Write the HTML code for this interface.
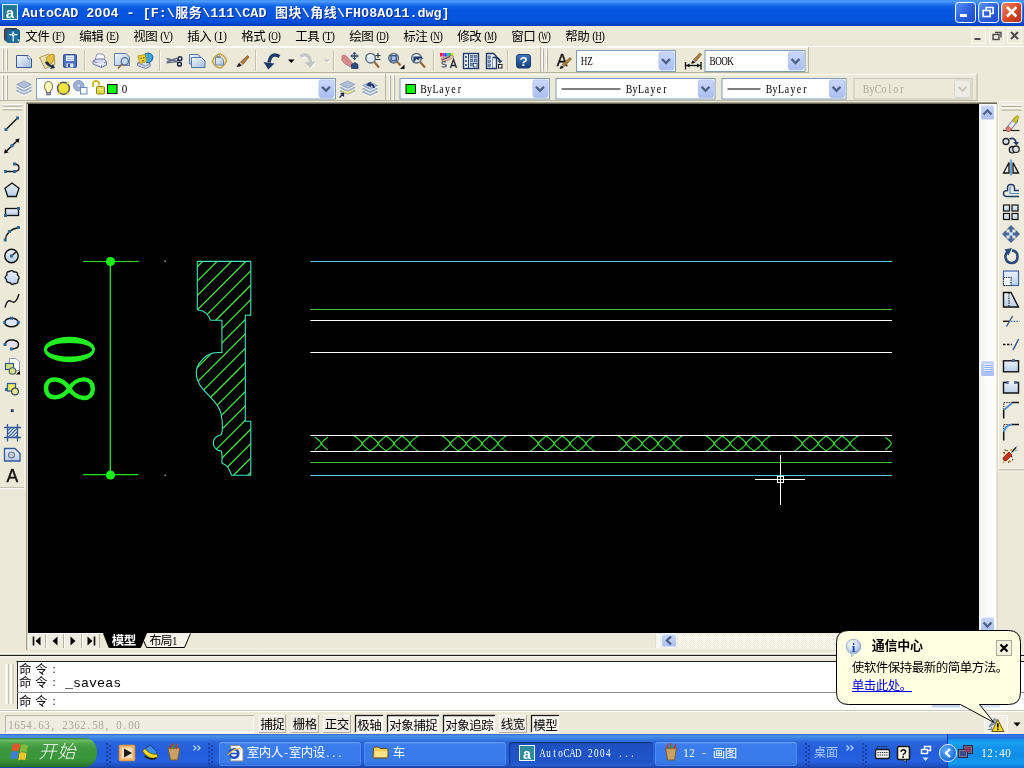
<!DOCTYPE html>
<html lang="zh-CN">
<head>
<meta charset="utf-8">
<title>AutoCAD 2004 - [F:\服务\111\CAD 图块\角线\FH08A011.dwg]</title>
<style>
html,body{margin:0;padding:0;}
body{width:1024px;height:768px;overflow:hidden;position:relative;background:#ECE9D8;font-family:"Liberation Sans",sans-serif;font-size:12px;}
#screen{position:absolute;left:0;top:0;width:1024px;height:768px;overflow:hidden;}
#screen div{position:absolute;box-sizing:border-box;}
#tl span{position:absolute;white-space:pre;color:transparent;overflow:hidden;max-width:320px;pointer-events:none;}
#ov{position:absolute;left:0;top:0;width:1024px;height:768px;will-change:transform;}
#ov .cjk{font-family:"Liberation Sans","Noto Sans CJK SC",sans-serif;}

#title{background:linear-gradient(to bottom,#3F8EF4 0%,#4C9BFA 6%,#2F80F2 13%,#0F62E6 24%,#0757E0 40%,#0555DF 75%,#054CD6 86%,#0443C4 95%,#0A3DB0 100%);}
#menubar{background:#ECE9D8;}
.tb{background:#ECE9D8;}
#canvas{background:#000;}
#cmd{background:#fff;}
#taskbar{background:linear-gradient(to bottom,#3168D5 0%,#4993E6 6%,#3D84E4 12%,#2966DB 24%,#245DDB 50%,#2562DF 80%,#1F50C0 94%,#1941A5 100%);}
#start{background:linear-gradient(to bottom,#388238 0%,#6DBB69 8%,#4FA64B 18%,#3C963C 40%,#3A973A 70%,#2F7E2F 92%,#256A25 100%);border-radius:0 12px 12px 0/0 14px 14px 0;}
#tray{background:linear-gradient(to bottom,#2868DC 0%,#3478E4 6%,#2A6EE0 12%,#1C8AE8 16%,#18A2F2 24%,#1394EA 40%,#0F8DE8 65%,#139BF0 86%,#0E6FD2 100%);border-left:1px solid #103CA0;}
.task{border-radius:3px;background:linear-gradient(to bottom,#5591F0 0%,#3A7CEC 12%,#3A7BEA 80%,#2F6CDC 100%);box-shadow:inset 0 0 0 1px rgba(255,255,255,.12);}
.task.act{background:linear-gradient(to bottom,#1B4BB6 0%,#1E52C4 20%,#1F55C8 85%,#2A60D0 100%);box-shadow:inset 1px 1px 1px rgba(0,0,0,.35);}

</style>
</head>
<body>
<div id="screen">
<div class="tbar" id="title" style="left:0px;top:0px;width:1024px;height:26px;"></div>
<div class="" id="menubar" style="left:0px;top:26px;width:1024px;height:20px;"></div>
<div class="" id="canvas" style="left:28px;top:104px;width:951px;height:529px;"></div>
<div class="" id="cmd" style="left:18px;top:662px;width:1006px;height:47.5px;"></div>
<div class="" id="taskbar" style="left:0px;top:734px;width:1024px;height:34px;"></div>
<div class="" id="start" style="left:0px;top:738px;width:97px;height:29px;"></div>
<div class="task" style="left:219px;top:741.5px;width:142px;height:24.5px;"></div>
<div class="task" style="left:364px;top:741.5px;width:142px;height:24.5px;"></div>
<div class="task act" style="left:508.5px;top:741.5px;width:144px;height:24.5px;"></div>
<div class="task" style="left:654.5px;top:741.5px;width:142px;height:24.5px;"></div>
<div class="" id="tray" style="left:947px;top:734px;width:77px;height:34px;"></div>
<div id="tl" style="left:0;top:0;width:1024px;height:768px"><span style="left:22px;top:4px;font-size:13px;line-height:16px">AutoCAD 2004 - [F:\服务\111\CAD 图块\角线\FH08A011.dwg]</span><span style="left:25.5px;top:30px;font-size:12px;line-height:12px">文件(F)</span><span style="left:79.5px;top:30px;font-size:12px;line-height:12px">编辑(E)</span><span style="left:133.5px;top:30px;font-size:12px;line-height:12px">视图(V)</span><span style="left:187.5px;top:30px;font-size:12px;line-height:12px">插入(I)</span><span style="left:241.5px;top:30px;font-size:12px;line-height:12px">格式(O)</span><span style="left:295.5px;top:30px;font-size:12px;line-height:12px">工具(T)</span><span style="left:349.5px;top:30px;font-size:12px;line-height:12px">绘图(D)</span><span style="left:403.5px;top:30px;font-size:12px;line-height:12px">标注(N)</span><span style="left:457.5px;top:30px;font-size:12px;line-height:12px">修改(M)</span><span style="left:511.5px;top:30px;font-size:12px;line-height:12px">窗口(W)</span><span style="left:565.5px;top:30px;font-size:12px;line-height:12px">帮助(H)</span><span style="left:581px;top:54.5px;font-size:12px;line-height:12px">HZ</span><span style="left:709.5px;top:54.5px;font-size:12px;line-height:12px">BOOK</span><span style="left:420.5px;top:82.5px;font-size:12px;line-height:12px">ByLayer</span><span style="left:626px;top:82.5px;font-size:12px;line-height:12px">ByLayer</span><span style="left:766px;top:82.5px;font-size:12px;line-height:12px">ByLayer</span><span style="left:863px;top:82.5px;font-size:12px;line-height:12px">ByColor</span><span style="left:121.5px;top:83px;font-size:12px;line-height:12px">0</span><span style="left:150px;top:634.5px;font-size:12px;line-height:12px">布局1</span><span style="left:112px;top:634px;font-size:12px;line-height:12px">模型</span><span style="left:19px;top:663px;font-size:12px;line-height:12px">命令: </span><span style="left:19px;top:676px;font-size:12px;line-height:12px">命令: _saveas</span><span style="left:19px;top:695px;font-size:12px;line-height:12px">命令: </span><span style="left:8px;top:719px;font-size:12px;line-height:12px">1654.63, 2362.58, 0.00</span><span style="left:260.5px;top:718.5px;font-size:12px;line-height:12px">捕捉</span><span style="left:293px;top:718.5px;font-size:12px;line-height:12px">栅格</span><span style="left:325px;top:718.5px;font-size:12px;line-height:12px">正交</span><span style="left:357.5px;top:719px;font-size:12px;line-height:12px">极轴</span><span style="left:389.5px;top:719px;font-size:12px;line-height:12px">对象捕捉</span><span style="left:445.5px;top:719px;font-size:12px;line-height:12px">对象追踪</span><span style="left:501px;top:718.5px;font-size:12px;line-height:12px">线宽</span><span style="left:533.5px;top:719px;font-size:12px;line-height:12px">模型</span><span style="left:38px;top:743px;font-size:13px;line-height:19px">开始</span><span style="left:247px;top:746.5px;font-size:12px;line-height:12px">室内人-室内设...</span><span style="left:393px;top:746.5px;font-size:12px;line-height:12px">车</span><span style="left:539.5px;top:747px;font-size:12px;line-height:12px">AutoCAD 2004 ...</span><span style="left:683px;top:747px;font-size:12px;line-height:12px">12 - 画图</span><span style="left:814px;top:746.5px;font-size:12px;line-height:12px">桌面</span><span style="left:981px;top:747px;font-size:12px;line-height:12px">12:40</span><span style="left:872px;top:639px;font-size:12px;line-height:12px">通信中心</span><span style="left:852px;top:661.5px;font-size:12px;line-height:12px">使软件保持最新的简单方法。</span><span style="left:852px;top:679px;font-size:12px;line-height:12px">单击此处。</span></div>
<svg id="ov" width="1024" height="768" viewBox="0 0 1024 768">
<defs>
<linearGradient id="cbbtn" x1="0" y1="0" x2="0" y2="1"><stop offset="0" stop-color="#C9D7FC"/><stop offset=".5" stop-color="#BBCCF8"/><stop offset="1" stop-color="#A9BCEF"/></linearGradient>
<linearGradient id="tbtn" x1="0" y1="0" x2="1" y2="1"><stop offset="0" stop-color="#5C93F8"/><stop offset=".5" stop-color="#2C62E0"/><stop offset="1" stop-color="#1D49C8"/></linearGradient>
<linearGradient id="tclose" x1="0" y1="0" x2="1" y2="1"><stop offset="0" stop-color="#F0886A"/><stop offset=".5" stop-color="#D84A26"/><stop offset="1" stop-color="#B32F12"/></linearGradient>
<linearGradient id="icoblue" x1="0" y1="0" x2="1" y2="1"><stop offset="0" stop-color="#F4F8FD"/><stop offset="1" stop-color="#9DBBDD"/></linearGradient>
<linearGradient id="icoblue2" x1="0" y1="0" x2="0" y2="1"><stop offset="0" stop-color="#EAF1FA"/><stop offset="1" stop-color="#B9CFE8"/></linearGradient>
<linearGradient id="helpg" x1="0" y1="0" x2="0" y2="1"><stop offset="0" stop-color="#3F78B8"/><stop offset="1" stop-color="#14407C"/></linearGradient>
<linearGradient id="vsb" x1="0" y1="0" x2="1" y2="0"><stop offset="0" stop-color="#F3F1EC"/><stop offset=".5" stop-color="#FDFDFB"/><stop offset="1" stop-color="#FEFEFB"/></linearGradient>
<radialGradient id="infog" cx=".4" cy=".35" r=".7"><stop offset="0" stop-color="#FFFFFF"/><stop offset=".6" stop-color="#C8D8F0"/><stop offset="1" stop-color="#7E9CCB"/></radialGradient>
<radialGradient id="trayb" cx=".4" cy=".35" r=".7"><stop offset="0" stop-color="#5FB0FF"/><stop offset="1" stop-color="#1463D6"/></radialGradient>
</defs>
<rect x="2.5" y="4.5" width="15" height="15" fill="#2A8AA0" stroke="#DDF5F8" stroke-width="1"/>
<rect x="4" y="6" width="12" height="12" fill="#1F7896"/>
<text x="10" y="17.5" text-anchor="middle" font-family="'Liberation Sans',sans-serif" font-weight="bold" font-size="15" fill="#fff">a</text>
<text transform="translate(23,18) scale(1.03,1)" x="0 7.8 15.6 23.4 31.2 39 46.8 54.6 62.4" font-family="'Liberation Mono',monospace" font-size="13" font-weight="bold" fill="#0A2C8C">AutoCAD 2</text>
<text transform="translate(99.47,18) scale(1.07,1)" text-anchor="middle" font-family="'Liberation Sans',sans-serif" font-size="13" font-weight="bold" fill="#0A2C8C">0</text>
<text transform="translate(107.52,18) scale(1.07,1)" text-anchor="middle" font-family="'Liberation Sans',sans-serif" font-size="13" font-weight="bold" fill="#0A2C8C">0</text>
<text transform="translate(111.55,18) scale(1.03,1)" x="0 7.8 15.6 23.4 31.2 39 46.8 54.6" font-family="'Liberation Mono',monospace" font-size="13" font-weight="bold" fill="#0A2C8C">4 - [F:\</text>
<text class="cjk" x="176.25 189.85" y="17.78" font-size="13" font-weight="bold" fill="#0A2C8C">服务</text>
<text transform="translate(203.15,18) scale(1.03,1)" x="0 7.8 15.6 23.4 31.2 39 46.8 54.6" font-family="'Liberation Mono',monospace" font-size="13" font-weight="bold" fill="#0A2C8C">\111\CAD</text>
<text class="cjk" x="275.9 289.5" y="17.78" font-size="13" font-weight="bold" fill="#0A2C8C">图块</text>
<text transform="translate(302.8,18) scale(1.03,1)" x="0" font-family="'Liberation Mono',monospace" font-size="13" font-weight="bold" fill="#0A2C8C">\</text>
<text class="cjk" x="311.15 324.75" y="17.78" font-size="13" font-weight="bold" fill="#0A2C8C">角线</text>
<text transform="translate(338.05,18) scale(1.03,1)" x="0 7.8 15.6" font-family="'Liberation Mono',monospace" font-size="13" font-weight="bold" fill="#0A2C8C">\FH</text>
<text transform="translate(366.23,18) scale(1.07,1)" text-anchor="middle" font-family="'Liberation Sans',sans-serif" font-size="13" font-weight="bold" fill="#0A2C8C">0</text>
<text transform="translate(370.25,18) scale(1.03,1)" x="0 7.8" font-family="'Liberation Mono',monospace" font-size="13" font-weight="bold" fill="#0A2C8C">8A</text>
<text transform="translate(390.38,18) scale(1.07,1)" text-anchor="middle" font-family="'Liberation Sans',sans-serif" font-size="13" font-weight="bold" fill="#0A2C8C">0</text>
<text transform="translate(394.4,18) scale(1.03,1)" x="0 7.8 15.6 23.4 31.2 39 46.8" font-family="'Liberation Mono',monospace" font-size="13" font-weight="bold" fill="#0A2C8C">11.dwg]</text>
<text transform="translate(22,17) scale(1.03,1)" x="0 7.8 15.6 23.4 31.2 39 46.8 54.6 62.4" font-family="'Liberation Mono',monospace" font-size="13" font-weight="bold" fill="#fff">AutoCAD 2</text>
<text transform="translate(98.47,17) scale(1.07,1)" text-anchor="middle" font-family="'Liberation Sans',sans-serif" font-size="13" font-weight="bold" fill="#fff">0</text>
<text transform="translate(106.52,17) scale(1.07,1)" text-anchor="middle" font-family="'Liberation Sans',sans-serif" font-size="13" font-weight="bold" fill="#fff">0</text>
<text transform="translate(110.55,17) scale(1.03,1)" x="0 7.8 15.6 23.4 31.2 39 46.8 54.6" font-family="'Liberation Mono',monospace" font-size="13" font-weight="bold" fill="#fff">4 - [F:\</text>
<text class="cjk" x="175.25 188.85" y="16.78" font-size="13" font-weight="bold" fill="#fff">服务</text>
<text transform="translate(202.15,17) scale(1.03,1)" x="0 7.8 15.6 23.4 31.2 39 46.8 54.6" font-family="'Liberation Mono',monospace" font-size="13" font-weight="bold" fill="#fff">\111\CAD</text>
<text class="cjk" x="274.9 288.5" y="16.78" font-size="13" font-weight="bold" fill="#fff">图块</text>
<text transform="translate(301.8,17) scale(1.03,1)" x="0" font-family="'Liberation Mono',monospace" font-size="13" font-weight="bold" fill="#fff">\</text>
<text class="cjk" x="310.15 323.75" y="16.78" font-size="13" font-weight="bold" fill="#fff">角线</text>
<text transform="translate(337.05,17) scale(1.03,1)" x="0 7.8 15.6" font-family="'Liberation Mono',monospace" font-size="13" font-weight="bold" fill="#fff">\FH</text>
<text transform="translate(365.23,17) scale(1.07,1)" text-anchor="middle" font-family="'Liberation Sans',sans-serif" font-size="13" font-weight="bold" fill="#fff">0</text>
<text transform="translate(369.25,17) scale(1.03,1)" x="0 7.8" font-family="'Liberation Mono',monospace" font-size="13" font-weight="bold" fill="#fff">8A</text>
<text transform="translate(389.38,17) scale(1.07,1)" text-anchor="middle" font-family="'Liberation Sans',sans-serif" font-size="13" font-weight="bold" fill="#fff">0</text>
<text transform="translate(393.4,17) scale(1.03,1)" x="0 7.8 15.6 23.4 31.2 39 46.8" font-family="'Liberation Mono',monospace" font-size="13" font-weight="bold" fill="#fff">11.dwg]</text>
<rect x="955.5" y="2.5" width="20" height="20" fill="url(#tbtn)" stroke="#fff" stroke-width="1" rx="3"/>
<rect x="960" y="14" width="7" height="3" fill="#fff"/>
<rect x="978.6" y="2.5" width="20" height="20" fill="url(#tbtn)" stroke="#fff" stroke-width="1" rx="3"/>
<path d="M986.1 7.5h7v6h-7zM986.1 7v2" fill="none" stroke="#fff" stroke-width="1.6"/>
<rect x="983.1" y="10.5" width="7" height="6" fill="#2C62E0" stroke="#fff" stroke-width="1.6"/>
<rect x="1001.7" y="2.5" width="20" height="20" fill="url(#tclose)" stroke="#fff" stroke-width="1" rx="3"/>
<path d="M1006.9 7l9.500 9.500M1016.4 7l-9.500 9.500" fill="none" stroke="#fff" stroke-width="2.6"/>
<text class="cjk" x="25.25 37.25" y="40.75" font-size="12.5" fill="#000">文件</text>
<text transform="translate(51,40) scale(0.92,1)" x="1.26" font-family="'Liberation Serif',serif" font-size="12" fill="#000">(</text>
<text transform="translate(55.5,40) scale(0.92,1)" x="-0.08" font-family="'Liberation Serif',serif" font-size="12" fill="#000">F</text>
<text transform="translate(60,40) scale(0.92,1)" x="1.26" font-family="'Liberation Serif',serif" font-size="12" fill="#000">)</text>
<line x1="55.5" y1="42.5" x2="61.5" y2="42.5" stroke="#000" stroke-width="1"/>
<text class="cjk" x="79.25 91.25" y="40.75" font-size="12.5" fill="#000">编辑</text>
<text transform="translate(105,40) scale(0.92,1)" x="1.26" font-family="'Liberation Serif',serif" font-size="12" fill="#000">(</text>
<text transform="translate(109.5,40) scale(0.9,1)" x="-0.33" font-family="'Liberation Serif',serif" font-size="12" fill="#000">E</text>
<text transform="translate(114,40) scale(0.92,1)" x="1.26" font-family="'Liberation Serif',serif" font-size="12" fill="#000">)</text>
<line x1="109.5" y1="42.5" x2="115.5" y2="42.5" stroke="#000" stroke-width="1"/>
<text class="cjk" x="133.25 145.25" y="40.75" font-size="12.5" fill="#000">视图</text>
<text transform="translate(159,40) scale(0.92,1)" x="1.26" font-family="'Liberation Serif',serif" font-size="12" fill="#000">(</text>
<text transform="translate(163.5,40) scale(0.76,1)" x="-0.39" font-family="'Liberation Serif',serif" font-size="12" fill="#000">V</text>
<text transform="translate(168,40) scale(0.92,1)" x="1.26" font-family="'Liberation Serif',serif" font-size="12" fill="#000">)</text>
<line x1="163.5" y1="42.5" x2="169.5" y2="42.5" stroke="#000" stroke-width="1"/>
<text class="cjk" x="187.25 199.25" y="40.75" font-size="12.5" fill="#000">插入</text>
<text transform="translate(213,40) scale(0.92,1)" x="1.26" font-family="'Liberation Serif',serif" font-size="12" fill="#000">(</text>
<text transform="translate(217.5,40) scale(0.92,1)" x="1.26" font-family="'Liberation Serif',serif" font-size="12" fill="#000">I</text>
<text transform="translate(222,40) scale(0.92,1)" x="1.26" font-family="'Liberation Serif',serif" font-size="12" fill="#000">)</text>
<line x1="217.5" y1="42.5" x2="223.5" y2="42.5" stroke="#000" stroke-width="1"/>
<text class="cjk" x="241.25 253.25" y="40.75" font-size="12.5" fill="#000">格式</text>
<text transform="translate(267,40) scale(0.92,1)" x="1.26" font-family="'Liberation Serif',serif" font-size="12" fill="#000">(</text>
<text transform="translate(271.5,40) scale(0.76,1)" x="-0.39" font-family="'Liberation Serif',serif" font-size="12" fill="#000">O</text>
<text transform="translate(276,40) scale(0.92,1)" x="1.26" font-family="'Liberation Serif',serif" font-size="12" fill="#000">)</text>
<line x1="271.5" y1="42.5" x2="277.5" y2="42.5" stroke="#000" stroke-width="1"/>
<text class="cjk" x="295.25 307.25" y="40.75" font-size="12.5" fill="#000">工具</text>
<text transform="translate(321,40) scale(0.92,1)" x="1.26" font-family="'Liberation Serif',serif" font-size="12" fill="#000">(</text>
<text transform="translate(325.5,40) scale(0.9,1)" x="-0.33" font-family="'Liberation Serif',serif" font-size="12" fill="#000">T</text>
<text transform="translate(330,40) scale(0.92,1)" x="1.26" font-family="'Liberation Serif',serif" font-size="12" fill="#000">)</text>
<line x1="325.5" y1="42.5" x2="331.5" y2="42.5" stroke="#000" stroke-width="1"/>
<text class="cjk" x="349.25 361.25" y="40.75" font-size="12.5" fill="#000">绘图</text>
<text transform="translate(375,40) scale(0.92,1)" x="1.26" font-family="'Liberation Serif',serif" font-size="12" fill="#000">(</text>
<text transform="translate(379.5,40) scale(0.76,1)" x="-0.39" font-family="'Liberation Serif',serif" font-size="12" fill="#000">D</text>
<text transform="translate(384,40) scale(0.92,1)" x="1.26" font-family="'Liberation Serif',serif" font-size="12" fill="#000">)</text>
<line x1="379.5" y1="42.5" x2="385.5" y2="42.5" stroke="#000" stroke-width="1"/>
<text class="cjk" x="403.25 415.25" y="40.75" font-size="12.5" fill="#000">标注</text>
<text transform="translate(429,40) scale(0.92,1)" x="1.26" font-family="'Liberation Serif',serif" font-size="12" fill="#000">(</text>
<text transform="translate(433.5,40) scale(0.76,1)" x="-0.39" font-family="'Liberation Serif',serif" font-size="12" fill="#000">N</text>
<text transform="translate(438,40) scale(0.92,1)" x="1.26" font-family="'Liberation Serif',serif" font-size="12" fill="#000">)</text>
<line x1="433.5" y1="42.5" x2="439.5" y2="42.5" stroke="#000" stroke-width="1"/>
<text class="cjk" x="457.25 469.25" y="40.75" font-size="12.5" fill="#000">修改</text>
<text transform="translate(483,40) scale(0.92,1)" x="1.26" font-family="'Liberation Serif',serif" font-size="12" fill="#000">(</text>
<text transform="translate(487.5,40) scale(0.62,1)" x="-0.48" font-family="'Liberation Serif',serif" font-size="12" fill="#000">M</text>
<text transform="translate(492,40) scale(0.92,1)" x="1.26" font-family="'Liberation Serif',serif" font-size="12" fill="#000">)</text>
<line x1="487.5" y1="42.5" x2="493.5" y2="42.5" stroke="#000" stroke-width="1"/>
<text class="cjk" x="511.25 523.25" y="40.75" font-size="12.5" fill="#000">窗口</text>
<text transform="translate(537,40) scale(0.92,1)" x="1.26" font-family="'Liberation Serif',serif" font-size="12" fill="#000">(</text>
<text transform="translate(541.5,40) scale(0.58,1)" x="-0.51" font-family="'Liberation Serif',serif" font-size="12" fill="#000">W</text>
<text transform="translate(546,40) scale(0.92,1)" x="1.26" font-family="'Liberation Serif',serif" font-size="12" fill="#000">)</text>
<line x1="541.5" y1="42.5" x2="547.5" y2="42.5" stroke="#000" stroke-width="1"/>
<text class="cjk" x="565.25 577.25" y="40.75" font-size="12.5" fill="#000">帮助</text>
<text transform="translate(591,40) scale(0.92,1)" x="1.26" font-family="'Liberation Serif',serif" font-size="12" fill="#000">(</text>
<text transform="translate(595.5,40) scale(0.76,1)" x="-0.39" font-family="'Liberation Serif',serif" font-size="12" fill="#000">H</text>
<text transform="translate(600,40) scale(0.92,1)" x="1.26" font-family="'Liberation Serif',serif" font-size="12" fill="#000">)</text>
<line x1="595.5" y1="42.5" x2="601.5" y2="42.5" stroke="#000" stroke-width="1"/>
<rect x="4.5" y="28.5" width="12.5" height="12" fill="#5A5248" stroke="#3A3A44" stroke-width="1" rx="1"/>
<rect x="6.5" y="29.8" width="13" height="12.5" fill="#1C6E9E" stroke="#16507E" stroke-width="1" rx="1.5"/>
<path d="M13.200 31.500v10M9 34.600h8.500" fill="none" stroke="#E4F6FF" stroke-width="1.3"/>
<circle cx="13.200" cy="34.600" r="1.600" fill="#fff"/><circle cx="13.200" cy="34.600" r=".7" fill="#16507E"/>
<path d="M17 39.500h2.500v2.500z" fill="#E4F6FF"/>
<rect x="971.5" y="28.5" width="14" height="15" fill="#EEEBDC" stroke="#F8F7F0" stroke-width="1"/>
<rect x="974.5" y="38" width="6" height="2" fill="#4A4A4A"/>
<rect x="989.5" y="28.5" width="14" height="15" fill="#EEEBDC" stroke="#F8F7F0" stroke-width="1"/>
<path d="M995 32.5h6v5" fill="none" stroke="#4A4A4A" stroke-width="1.4"/>
<rect x="993" y="34.5" width="6" height="5" fill="#EEEBDC" stroke="#4A4A4A" stroke-width="1.4"/>
<rect x="1007.5" y="28.5" width="14" height="15" fill="#EEEBDC" stroke="#F8F7F0" stroke-width="1"/>
<path d="M1011 32l7 7M1018 32l-7 7" fill="none" stroke="#4A4A4A" stroke-width="2"/>
<line x1="0" y1="46.5" x2="1024" y2="46.5" stroke="#FFFFFF" stroke-width="1"/>
<rect x="0" y="47" width="541" height="26" fill="#ECE9D8"/>
<line x1="0" y1="47.5" x2="541" y2="47.5" stroke="#FBFAF5" stroke-width="1"/>
<line x1="0" y1="72.5" x2="541" y2="72.5" stroke="#B8B4A2" stroke-width="1"/>
<line x1="540.5" y1="47" x2="540.5" y2="73" stroke="#B8B4A2" stroke-width="1"/>
<rect x="541" y="47" width="268" height="26" fill="#ECE9D8"/>
<line x1="541" y1="47.5" x2="809" y2="47.5" stroke="#FBFAF5" stroke-width="1"/>
<line x1="541" y1="72.5" x2="809" y2="72.5" stroke="#B8B4A2" stroke-width="1"/>
<line x1="808.5" y1="47" x2="808.5" y2="73" stroke="#B8B4A2" stroke-width="1"/>
<rect x="0" y="74" width="386" height="27" fill="#ECE9D8"/>
<line x1="0" y1="74.5" x2="386" y2="74.5" stroke="#FBFAF5" stroke-width="1"/>
<line x1="0" y1="100.5" x2="386" y2="100.5" stroke="#B8B4A2" stroke-width="1"/>
<line x1="385.5" y1="74" x2="385.5" y2="101" stroke="#B8B4A2" stroke-width="1"/>
<rect x="386" y="74" width="591.5" height="27" fill="#ECE9D8"/>
<line x1="386" y1="74.5" x2="977.5" y2="74.5" stroke="#FBFAF5" stroke-width="1"/>
<line x1="386" y1="100.5" x2="977.5" y2="100.5" stroke="#B8B4A2" stroke-width="1"/>
<line x1="977" y1="74" x2="977" y2="101" stroke="#B8B4A2" stroke-width="1"/>
<line x1="2.5" y1="48.5" x2="2.5" y2="71.5" stroke="#FFFFFF" stroke-width="1"/>
<line x1="3.5" y1="48.5" x2="3.5" y2="71.5" stroke="#B5B19F" stroke-width="1"/>
<line x1="6.5" y1="48.5" x2="6.5" y2="71.5" stroke="#FFFFFF" stroke-width="1"/>
<line x1="7.5" y1="48.5" x2="7.5" y2="71.5" stroke="#B5B19F" stroke-width="1"/>
<line x1="542.5" y1="48.5" x2="542.5" y2="71.5" stroke="#FFFFFF" stroke-width="1"/>
<line x1="543.5" y1="48.5" x2="543.5" y2="71.5" stroke="#B5B19F" stroke-width="1"/>
<line x1="546.5" y1="48.5" x2="546.5" y2="71.5" stroke="#FFFFFF" stroke-width="1"/>
<line x1="547.5" y1="48.5" x2="547.5" y2="71.5" stroke="#B5B19F" stroke-width="1"/>
<line x1="2.5" y1="75.5" x2="2.5" y2="100" stroke="#FFFFFF" stroke-width="1"/>
<line x1="3.5" y1="75.5" x2="3.5" y2="100" stroke="#B5B19F" stroke-width="1"/>
<line x1="6.5" y1="75.5" x2="6.5" y2="100" stroke="#FFFFFF" stroke-width="1"/>
<line x1="7.5" y1="75.5" x2="7.5" y2="100" stroke="#B5B19F" stroke-width="1"/>
<line x1="389.5" y1="75.5" x2="389.5" y2="100" stroke="#FFFFFF" stroke-width="1"/>
<line x1="390.5" y1="75.5" x2="390.5" y2="100" stroke="#B5B19F" stroke-width="1"/>
<line x1="393.5" y1="75.5" x2="393.5" y2="100" stroke="#FFFFFF" stroke-width="1"/>
<line x1="394.5" y1="75.5" x2="394.5" y2="100" stroke="#B5B19F" stroke-width="1"/>
<line x1="84.5" y1="50" x2="84.5" y2="71" stroke="#C5C2B2" stroke-width="1"/>
<line x1="85.5" y1="50" x2="85.5" y2="71" stroke="#F7F5EC" stroke-width="1"/>
<line x1="159.5" y1="50" x2="159.5" y2="71" stroke="#C5C2B2" stroke-width="1"/>
<line x1="160.5" y1="50" x2="160.5" y2="71" stroke="#F7F5EC" stroke-width="1"/>
<line x1="255.5" y1="50" x2="255.5" y2="71" stroke="#C5C2B2" stroke-width="1"/>
<line x1="256.5" y1="50" x2="256.5" y2="71" stroke="#F7F5EC" stroke-width="1"/>
<line x1="333.5" y1="50" x2="333.5" y2="71" stroke="#C5C2B2" stroke-width="1"/>
<line x1="334.5" y1="50" x2="334.5" y2="71" stroke="#F7F5EC" stroke-width="1"/>
<line x1="433.5" y1="50" x2="433.5" y2="71" stroke="#C5C2B2" stroke-width="1"/>
<line x1="434.5" y1="50" x2="434.5" y2="71" stroke="#F7F5EC" stroke-width="1"/>
<line x1="507.5" y1="50" x2="507.5" y2="71" stroke="#C5C2B2" stroke-width="1"/>
<line x1="508.5" y1="50" x2="508.5" y2="71" stroke="#F7F5EC" stroke-width="1"/>
<rect x="576.5" y="50.5" width="99" height="21" fill="#FFFFFF" stroke="#7F9DB9" stroke-width="1"/>
<rect x="659" y="52" width="15" height="18" fill="url(#cbbtn)" stroke="#B4C7F3" stroke-width="1" rx="2"/>
<path d="M662 59l4 4l4 -4" fill="none" stroke="#4D6185" stroke-width="2.4"/>
<text transform="translate(581,64.5) scale(0.76,1)" x="-0.39 8.15" font-family="'Liberation Serif',serif" font-size="12" fill="#000">HZ</text>
<rect x="705" y="50.5" width="100" height="21" fill="#FFFFFF" stroke="#7F9DB9" stroke-width="1"/>
<rect x="788.5" y="52" width="15" height="18" fill="url(#cbbtn)" stroke="#B4C7F3" stroke-width="1" rx="2"/>
<path d="M791.5 59l4 4l4 -4" fill="none" stroke="#4D6185" stroke-width="2.4"/>
<text transform="translate(709.5,64.5) scale(0.76,1)" x="-0.06 7.48 15.36 23.24" font-family="'Liberation Serif',serif" font-size="12" fill="#000">BOOK</text>
<rect x="36.5" y="78.5" width="299" height="20.5" fill="#FFFFFF" stroke="#7F9DB9" stroke-width="1"/>
<rect x="319" y="80" width="15" height="17.5" fill="url(#cbbtn)" stroke="#B4C7F3" stroke-width="1" rx="2"/>
<path d="M322 86.75l4 4l4 -4" fill="none" stroke="#4D6185" stroke-width="2.4"/>
<rect x="400" y="78.5" width="149.5" height="20.5" fill="#FFFFFF" stroke="#7F9DB9" stroke-width="1"/>
<rect x="533" y="80" width="15" height="17.5" fill="url(#cbbtn)" stroke="#B4C7F3" stroke-width="1" rx="2"/>
<path d="M536 86.75l4 4l4 -4" fill="none" stroke="#4D6185" stroke-width="2.4"/>
<rect x="406" y="84.5" width="9.5" height="9" fill="#00FF00" stroke="#000" stroke-width="1"/>
<text transform="translate(420.5,92.5) scale(0.82,1)" x="-0.36 7.91 14.53 22.8 29.74 37.36 45.3" font-family="'Liberation Serif',serif" font-size="12" fill="#000">ByLayer</text>
<rect x="556" y="78.5" width="159" height="20.5" fill="#FFFFFF" stroke="#7F9DB9" stroke-width="1"/>
<rect x="698.5" y="80" width="15" height="17.5" fill="url(#cbbtn)" stroke="#B4C7F3" stroke-width="1" rx="2"/>
<path d="M701.5 86.75l4 4l4 -4" fill="none" stroke="#4D6185" stroke-width="2.4"/>
<line x1="561.5" y1="89" x2="620.5" y2="89" stroke="#000" stroke-width="1.1"/>
<text transform="translate(626,92.5) scale(0.82,1)" x="-0.36 7.91 14.53 22.8 29.74 37.36 45.3" font-family="'Liberation Serif',serif" font-size="12" fill="#000">ByLayer</text>
<rect x="722" y="78.5" width="124" height="20.5" fill="#FFFFFF" stroke="#7F9DB9" stroke-width="1"/>
<rect x="829.5" y="80" width="15" height="17.5" fill="url(#cbbtn)" stroke="#B4C7F3" stroke-width="1" rx="2"/>
<path d="M832.5 86.75l4 4l4 -4" fill="none" stroke="#4D6185" stroke-width="2.4"/>
<line x1="727.5" y1="89" x2="760.5" y2="89" stroke="#000" stroke-width="1.1"/>
<text transform="translate(766,92.5) scale(0.82,1)" x="-0.36 7.91 14.53 22.8 29.74 37.36 45.3" font-family="'Liberation Serif',serif" font-size="12" fill="#000">ByLayer</text>
<rect x="854" y="78.5" width="118" height="20.5" fill="#ECE9D8" stroke="#C9C7BA" stroke-width="1"/>
<rect x="954.5" y="80" width="16" height="17.5" fill="#EEEDE5" stroke="#D8D6CA" stroke-width="1" rx="2"/>
<path d="M958.5 86.75l4 4l4 -4" fill="none" stroke="#C9C7BA" stroke-width="2"/>
<text transform="translate(863,92.5) scale(0.82,1)" x="-0.36 7.91 14.19 22.47 31.08 37.02 45.3" font-family="'Liberation Serif',serif" font-size="12" fill="#ACA899">ByColor</text>
<rect x="107.5" y="84.5" width="9.5" height="9" fill="#00FF00" stroke="#000" stroke-width="1"/>
<text transform="translate(121.5,93) scale(0.92,1)" x="0.26" font-family="'Liberation Serif',serif" font-size="12" fill="#000">0</text>
<g id="icons"><path d="M16.5 55.5h11.500l3.500 3.500v8.500h-15z" fill="url(#icoblue)" stroke="#3B5A94" stroke-width="1"/><path d="M28 55.5v3.500h3.500" fill="#fff" stroke="#3B5A94" stroke-width="0.8"/><path d="M39.5 57.5l9 -3.500l1 1.500l4.500 -1l1 10l-10 4z" fill="#E9DDB0" stroke="#B59A5A" stroke-width="1"/><path d="M47 57q5 -4 7 -2q1 5 -3 9q-4 1 -5 -2z" fill="#E6C23C" stroke="#A88A20" stroke-width="0.8"/><path d="M45 62q1 4 6 5l-1 2l5 -1l-2 -4l-1 1.500q-3 -1 -4 -4z" fill="#1C2E4C"/><rect x="63.5" y="54.5" width="13" height="13" fill="#4D72C4" stroke="#33508F" stroke-width="1" rx="1"/><rect x="66" y="55.5" width="8" height="5.5" fill="#E8EEF8"/><path d="M67 57.5h6M67 59.5h6" fill="none" stroke="#9FB2D8" stroke-width="0.8"/><rect x="66.5" y="63.5" width="7" height="4" fill="#D8E0F0"/><rect x="68" y="64" width="2" height="3" fill="#33508F"/><path d="M95 60l2 -6h6l2 3l-2 4z" fill="#FAFAFF" stroke="#8A93B5" stroke-width="1"/><path d="M93 61l4 -2h7l2.500 2.500v3.500l-5 2.500l-8.500 -3.500z" fill="#D7DBEC" stroke="#6F7AA5" stroke-width="1"/><path d="M93 61l8.500 3.500l5 -3M101.500 64.5v3" fill="none" stroke="#6F7AA5" stroke-width="0.8"/><path d="M97 63l4 1.500l3 -1.500" fill="none" stroke="#fff" stroke-width="1.2"/><path d="M114.500 53.5h11.500l3.500 3.500v8.500h-15z" fill="url(#icoblue)" stroke="#5F82B4" stroke-width="1"/><circle cx="124.8" cy="61.2" r="3.6" fill="#C9DCF0" stroke="#5C7697" stroke-width="1.3" fill-opacity=".85"/><line x1="122" y1="64" x2="118" y2="68.5" stroke="#9A6A3A" stroke-width="1.8"/><path d="M137.500 63l3 -1.500h7l2.500 2v3l-4.500 2l-8 -3z" fill="#D7DBEC" stroke="#6F7AA5" stroke-width="1"/><path d="M137.500 63l8 3l4.500 -2.500" fill="none" stroke="#6F7AA5" stroke-width="0.8"/><path d="M145 54q6 -3 8 3q0 4 -4 6l-3 -1z" fill="#3FA7DE" stroke="#1D5C9A" stroke-width="1"/><path d="M138 56l7 -1.500l1.500 7l-6.500 2z" fill="#F2D23A" stroke="#B89A1C" stroke-width="1"/><rect x="140.5" y="57.5" width="1.5" height="1.5" fill="#8A6A10"/><rect x="143" y="57" width="1.5" height="1.5" fill="#8A6A10"/><rect x="142" y="60" width="1.5" height="1.5" fill="#8A6A10"/><path d="M166.500 58.5l11 3l-11 1.200M167 61.8l10 -3.500" fill="none" stroke="#67718C" stroke-width="1.5"/><circle cx="180" cy="58.7" r="1.9" fill="none" stroke="#1F2A48" stroke-width="1.5"/><circle cx="179.5" cy="64.2" r="1.9" fill="none" stroke="#1F2A48" stroke-width="1.5"/><path d="M177 60.5l1.500 -1M177 62.5l1.200 .8" fill="none" stroke="#1F2A48" stroke-width="1.4"/><path d="M189.500 54.5h8.500l3 3v6.500h-11.500z" fill="url(#icoblue)" stroke="#4F78AE" stroke-width="1"/><path d="M191.500 57.5h10l3.500 3.500v6.500h-13.500z" fill="url(#icoblue)" stroke="#4F78AE" stroke-width="1"/><path d="M219.500 53.8q5 1.500 7 6.500q-1 5 -6.500 7.700q-5.500 -1 -7.500 -6.500q1.500 -5.500 7 -7.700z" fill="#EFE6C2" stroke="#C6A54A" stroke-width="1.6"/><path d="M215.500 57.5h5.500l2.500 2.500v5h-8z" fill="url(#icoblue)" stroke="#6F8AAE" stroke-width="1"/><path d="M216.500 56.5q1.500 -3.500 4 0z" fill="#F4F4F4" stroke="#777" stroke-width="0.8"/><path d="M236.500 67l2.500 -4.500l3.500 2.500q-2.500 2 -6 2z" fill="#1A1A1A"/><path d="M240 62.5l7.500 -7l1.500 1.500l-6.500 8z" fill="#B07A3A" stroke="#6B4A22" stroke-width="0.6"/><path d="M239.500 62.5l3 2.500" fill="none" stroke="#D8D8D8" stroke-width="1.2"/><path d="M279.500 56.5q-8.500 -5 -10.500 6" fill="none" stroke="#1F3B69" stroke-width="3.4"/><path d="M263.500 62l11 1.500l-6.200 6z" fill="#1F3B69"/><path d="M288 59.5h6.500l-3.250 3.500z" fill="#000"/><path d="M301.500 57.500q8.500 -5 10.500 6" fill="none" stroke="#FFFFFF" stroke-width="3.2"/><path d="M305.500 63l11 -.5l-5.200 6.500z" fill="#FFFFFF"/><path d="M300.500 56.5q8.500 -5 10.500 6" fill="none" stroke="#C2C4C6" stroke-width="3.2"/><path d="M304.500 62l11 -.5l-5.200 6.500z" fill="#C2C4C6"/><path d="M325 60.5h6l-3 3z" fill="#fff"/><path d="M324 59.5h6l-3 3z" fill="#C2C4C6"/><path d="M342 56q2 -2 4 0l6 6.500l1 3.500l-3 .5q-5 -1.500 -8 -6z" fill="#DC8E8E" stroke="#B86A6A" stroke-width="0.8"/><path d="M343.500 57l5 5M345.500 56l4.500 5" fill="none" stroke="#C47676" stroke-width="0.8"/><path d="M351.500 64.5l3.500 -2l3 2v4h-6.500z" fill="#2A4E84" stroke="#1A3560" stroke-width="0.8"/><path d="M354.500 52.5v7M351 56h7" fill="none" stroke="#2F4B78" stroke-width="1.3"/><path d="M353 54l1.500 -1.800l1.500 1.800M353 58l1.500 1.800l1.500 -1.800M352.500 54.5l-1.800 1.500l1.800 1.500M356.500 54.5l1.800 1.500l-1.800 1.500" fill="none" stroke="#2F4B78" stroke-width="1"/><line x1="374.1" y1="61.7" x2="379" y2="67.5" stroke="#9A6A3A" stroke-width="2.2"/><circle cx="370.6" cy="58.2" r="4.8" fill="#DCE6F0" stroke="#5C6B7E" stroke-width="1.5"/><path d="M367.6 57.7q1.500 -3 4 -2.500" fill="none" stroke="#fff" stroke-width="1.2"/><path d="M375.500 55.5h5M378 53v5M375.500 59.5h5" fill="none" stroke="#26354F" stroke-width="1.2"/><line x1="397.1" y1="61.7" x2="400.5" y2="65.5" stroke="#9A6A3A" stroke-width="2.2"/><circle cx="393.6" cy="58.2" r="4.8" fill="#DCE6F0" stroke="#5C6B7E" stroke-width="1.5"/><path d="M390.6 57.7q1.500 -3 4 -2.500" fill="none" stroke="#fff" stroke-width="1.2"/><rect x="391" y="55.7" width="5.2" height="5.2" fill="#A9C6EA" stroke="#2C4A7C" stroke-width="1.3"/><path d="M404.500 64.5v4.500h-4.500z" fill="#000"/><line x1="420" y1="61.7" x2="425" y2="67.5" stroke="#9A6A3A" stroke-width="2.2"/><circle cx="416.5" cy="58.2" r="4.8" fill="#DCE6F0" stroke="#5C6B7E" stroke-width="1.5"/><path d="M413.5 57.7q1.500 -3 4 -2.500" fill="none" stroke="#fff" stroke-width="1.2"/><path d="M414 61.5v-4.500h4.500l-1.500 1.500q3.500 -2.500 5 -.5q-3 -1 -4 1.500l-1.500 -1.500z" fill="#1F3B69" stroke="#1F3B69" stroke-width="1.2"/><rect x="440" y="53" width="2.3" height="3.5" fill="#E8202A"/><rect x="442.2" y="53" width="2.3" height="3.5" fill="#D020C8"/><rect x="444.4" y="53" width="2.3" height="3.5" fill="#3040E0"/><rect x="446.6" y="53" width="2.3" height="3.5" fill="#20B8E0"/><rect x="448.8" y="53" width="2.3" height="3.5" fill="#30C040"/><rect x="451" y="53" width="2.3" height="3.5" fill="#F0D020"/><path d="M441 58l6 -1l5 -2l2 2l-6 3.500l-6 1z" fill="#E8B8A0" stroke="#9A6A5A" stroke-width="0.6"/><path d="M442 60l8 -3.500" fill="none" stroke="#4A4A6A" stroke-width="1.2"/><path d="M450.500 68l3 -8.500l3 8.500M451.500 65.500h4" fill="none" stroke="#2A2A3A" stroke-width="1.4"/><path d="M446 62q-4 -1 -4 1q0 1.500 3 1.500q2 .5 1 2q-2 1 -4.500 0" fill="none" stroke="#5A6A7A" stroke-width="1.3"/><rect x="463.5" y="53.5" width="15" height="15" fill="#EEF3FA" stroke="#1F3B69" stroke-width="1.4"/><line x1="468.5" y1="54" x2="468.5" y2="68" stroke="#1F3B69" stroke-width="1"/><rect x="465" y="56" width="2" height="2" fill="#4A6A9A"/><rect x="470.5" y="55.5" width="2.5" height="2.5" fill="#8AA4C8" stroke="#2F4B78" stroke-width="0.6"/><rect x="474.5" y="55.5" width="2.5" height="2.5" fill="#8AA4C8" stroke="#2F4B78" stroke-width="0.6"/><rect x="465" y="60" width="2" height="2" fill="#4A6A9A"/><rect x="470.5" y="59.5" width="2.5" height="2.5" fill="#8AA4C8" stroke="#2F4B78" stroke-width="0.6"/><rect x="474.5" y="59.5" width="2.5" height="2.5" fill="#8AA4C8" stroke="#2F4B78" stroke-width="0.6"/><rect x="465" y="64" width="2" height="2" fill="#4A6A9A"/><rect x="470.5" y="63.5" width="2.5" height="2.5" fill="#8AA4C8" stroke="#2F4B78" stroke-width="0.6"/><rect x="474.5" y="63.5" width="2.5" height="2.5" fill="#8AA4C8" stroke="#2F4B78" stroke-width="0.6"/><rect x="473.5" y="63.5" width="3.5" height="3.5" fill="#fff" stroke="#2F4B78" stroke-width="0.8"/><path d="M486.500 53.5h7l3 3v12h-10z" fill="#EEF3FA" stroke="#1F3B69" stroke-width="1.4"/><rect x="488" y="56" width="2.5" height="2.5" fill="#8AA4C8" stroke="#2F4B78" stroke-width="0.6"/><rect x="488" y="60" width="2.5" height="2.5" fill="#8AA4C8" stroke="#2F4B78" stroke-width="0.6"/><rect x="488" y="64" width="2.5" height="2.5" fill="#8AA4C8" stroke="#2F4B78" stroke-width="0.6"/><line x1="492.5" y1="57" x2="492.5" y2="68" stroke="#7F93B4" stroke-width="1"/><path d="M493 57.5q6 -1 7 4" fill="none" stroke="#1F3B69" stroke-width="1.6"/><path d="M497.500 60.500h5l-2.500 3z" fill="#1F3B69"/><rect x="498.5" y="64.5" width="3.5" height="3.5" fill="#fff" stroke="#1A1A1A" stroke-width="1"/><rect x="516.5" y="54.5" width="14" height="13.5" fill="url(#helpg)" stroke="#1A3E78" stroke-width="1" rx="2.5"/><text x="523.500" y="66" text-anchor="middle" font-family="'Liberation Sans',sans-serif" font-weight="bold" font-size="13.500" fill="#fff">?</text><text x="562" y="65.5" text-anchor="middle" font-family="'Liberation Sans',sans-serif" font-size="16" fill="#111" stroke="#111" stroke-width=".35">A</text><path d="M559.500 69l1.500 -3.500l3 1.500q-1.500 2 -4.500 2z" fill="#1A1A1A"/><path d="M562 64.5l8 -7l1.500 1.500l-7 7.500z" fill="#B07A3A" stroke="#6B4A22" stroke-width="0.5"/><line x1="685.5" y1="65.5" x2="701" y2="65.5" stroke="#111" stroke-width="1.3"/><line x1="685.5" y1="62" x2="685.5" y2="69.5" stroke="#111" stroke-width="1.3"/><line x1="701" y1="62" x2="701" y2="69.5" stroke="#111" stroke-width="1.3"/><path d="M686 65.5l3.500 -2v4zM700.500 65.5l-3.500 -2v4z" fill="#111"/><path d="M691 63.5l1.500 -3l3 1.500q-1.500 2 -4.500 1.500z" fill="#1A1A1A"/><path d="M693.500 59.500l6.500 -6.500l1.500 1.500l-5.500 7z" fill="#B07A3A" stroke="#6B4A22" stroke-width="0.5"/><path d="M16.5 91l7.500 -3.500l7.500 3.500l-7.500 3.500z" fill="#AFC0DA" stroke="#7E93B5" stroke-width="0.7"/><path d="M16.5 92.2l7.500 3.500l7.500 -3.500" fill="none" stroke="#F7F9FC" stroke-width="0.9"/><path d="M16.5 87.8l7.500 -3.500l7.500 3.500l-7.500 3.500z" fill="#AFC0DA" stroke="#7E93B5" stroke-width="0.7"/><path d="M16.5 89l7.500 3.500l7.500 -3.500" fill="none" stroke="#F7F9FC" stroke-width="0.9"/><path d="M16.5 84.6l7.500 -3.500l7.500 3.500l-7.500 3.500z" fill="#AFC0DA" stroke="#7E93B5" stroke-width="0.7"/><path d="M16.5 85.8l7.500 3.500l7.500 -3.500" fill="none" stroke="#F7F9FC" stroke-width="0.9"/><path d="M44.500 86.500q0 -5 4 -5q4 0 4 5q0 2.500 -2 4.500v2h-4v-2q-2 -2 -2 -4.500z" fill="#FFF9B8" stroke="#6E6A50" stroke-width="1"/><rect x="46.5" y="92.5" width="4" height="2.5" fill="#9098A8" stroke="#5A6070" stroke-width="0.6"/><circle cx="63.5" cy="88.2" r="6" fill="#F2E23C" stroke="#50586A" stroke-width="1.4"/><path d="M58 82l2 2M69 82l-2 2M58 94.500l2 -2M69 94.500l-2 -2" fill="none" stroke="#E8D838" stroke-width="1.4"/><circle cx="78.7" cy="85.7" r="5.2" fill="#9FB4D6" stroke="#7C93BA" stroke-width="1"/><circle cx="78.7" cy="85.7" r="2.2" fill="#C8D6EA" stroke="#7C93BA" stroke-width="0.8"/><rect x="80.5" y="87.5" width="6.5" height="6.5" fill="#FCFDFE" stroke="#6C88B8" stroke-width="1"/><path d="M93 87v-3q0 -3 3 -3q3 0 3 3v1.500" fill="none" stroke="#C8BE30" stroke-width="2"/><rect x="96.5" y="86.5" width="8" height="7.5" fill="#DCD848" stroke="#8A8420" stroke-width="1" rx="1"/><line x1="98" y1="89.5" x2="103" y2="89.5" stroke="#F4F0A0" stroke-width="1"/><path d="M340 91l7.500 -3.500l7.500 3.500l-7.500 3.500z" fill="#E8DC50" stroke="#7E93B5" stroke-width="0.7"/><path d="M340 92.2l7.500 3.500l7.500 -3.500" fill="none" stroke="#F7F9FC" stroke-width="0.9"/><path d="M340 87.8l7.500 -3.500l7.500 3.500l-7.500 3.500z" fill="#AFC0DA" stroke="#7E93B5" stroke-width="0.7"/><path d="M340 89l7.500 3.500l7.500 -3.500" fill="none" stroke="#F7F9FC" stroke-width="0.9"/><path d="M340 84.6l7.500 -3.500l7.500 3.500l-7.500 3.500z" fill="#AFC0DA" stroke="#7E93B5" stroke-width="0.7"/><path d="M340 85.8l7.500 3.500l7.500 -3.500" fill="none" stroke="#F7F9FC" stroke-width="0.9"/><path d="M339.500 97.500l3.500 -3.500M340.500 93.500h3v3" fill="none" stroke="#1F2A58" stroke-width="1.3"/><path d="M362.5 92l7.500 -3.500l7.500 3.500l-7.500 3.500z" fill="#AFC0DA" stroke="#7E93B5" stroke-width="0.7"/><path d="M362.5 93.2l7.500 3.500l7.500 -3.500" fill="none" stroke="#F7F9FC" stroke-width="0.9"/><path d="M362.5 88.8l7.500 -3.500l7.500 3.500l-7.500 3.500z" fill="#AFC0DA" stroke="#7E93B5" stroke-width="0.7"/><path d="M362.5 90l7.500 3.500l7.500 -3.500" fill="none" stroke="#F7F9FC" stroke-width="0.9"/><path d="M362.5 85.6l7.500 -3.500l7.500 3.500l-7.500 3.500z" fill="#AFC0DA" stroke="#7E93B5" stroke-width="0.7"/><path d="M362.5 86.8l7.500 3.500l7.500 -3.500" fill="none" stroke="#F7F9FC" stroke-width="0.9"/><path d="M374 88q-1 -5 -6 -3.500" fill="none" stroke="#1F3B69" stroke-width="2"/><path d="M370.500 81.500l-4.500 3.500l5 2z" fill="#1F3B69"/><line x1="0" y1="487.5" x2="25" y2="487.5" stroke="#C5C2B2" stroke-width="1"/><line x1="0" y1="488.5" x2="25" y2="488.5" stroke="#FBFAF5" stroke-width="1"/><line x1="24.5" y1="104" x2="24.5" y2="488" stroke="#F8F7F1" stroke-width="1"/><line x1="2.5" y1="104.8" x2="22.5" y2="104.8" stroke="#FFFFFF" stroke-width="1.2"/><line x1="2.5" y1="106.1" x2="22.5" y2="106.1" stroke="#B5B19F" stroke-width="1.2"/><line x1="2.5" y1="108.4" x2="22.5" y2="108.4" stroke="#FFFFFF" stroke-width="1.2"/><line x1="2.5" y1="109.7" x2="22.5" y2="109.7" stroke="#B5B19F" stroke-width="1.2"/><line x1="6" y1="129.5" x2="17.5" y2="118" stroke="#111" stroke-width="1.4"/><rect x="4.5" y="128" width="3" height="3" fill="#2B6A96"/><rect x="16" y="116.5" width="3" height="3" fill="#2B6A96"/><line x1="5.5" y1="152" x2="18" y2="140" stroke="#111" stroke-width="1.5"/><path d="M4 153.500l1 -4.500l3.500 3.500zM19.500 138.500l-1 4.500l-3.500 -3.500z" fill="#111"/><rect x="10.5" y="144.2" width="3" height="3" fill="#2B6A96"/><line x1="5.5" y1="171.5" x2="14.5" y2="171.5" stroke="#111" stroke-width="1.4"/><path d="M14.500 171.5q5 -.5 4.500 -4q-.5 -3.500 -4.500 -3.500" fill="none" stroke="#111" stroke-width="1.3"/><rect x="4" y="170" width="3" height="3" fill="#2B6A96"/><rect x="13" y="170" width="3" height="3" fill="#2B6A96"/><rect x="13" y="162.5" width="3" height="3" fill="#2B6A96"/><path d="M12 183l7 5.200l-2.700 8.300h-8.600l-2.700 -8.300z" fill="url(#icoblue2)" stroke="#111" stroke-width="1.3"/><rect x="5.500" y="208.5" width="13" height="7" fill="url(#icoblue2)" stroke="#111" stroke-width="1.3"/><rect x="4" y="214" width="3" height="3" fill="#2B6A96"/><rect x="17" y="207" width="3" height="3" fill="#2B6A96"/><path d="M5.200 240q1 -10 13.300 -12.500" fill="none" stroke="#111" stroke-width="1.3"/><rect x="3.7" y="238.5" width="3" height="3" fill="#2B6A96"/><rect x="7.9" y="230" width="3" height="3" fill="#2B6A96"/><rect x="17" y="226" width="3" height="3" fill="#2B6A96"/><circle cx="11.5" cy="256" r="6.7" fill="url(#icoblue2)" stroke="#111" stroke-width="1.4"/><line x1="11.5" y1="256" x2="16" y2="252" stroke="#111" stroke-width="1.3"/><rect x="10" y="254.5" width="3" height="3" fill="#2B6A96"/><path d="M7 275q-1 -3.500 2.500 -3.500q2.500 -2 4.500 .5q4 -.5 3.500 3q3 2.500 .5 5q.5 4 -3.500 3.500q-3 2 -4.500 -1q-4 .5 -3.500 -3q-3 -2 .5 -4.500z" fill="url(#icoblue2)" stroke="#111" stroke-width="1.3"/><path d="M5 307.500q2 -9 6.500 -6q4.500 3 7.500 -7.500" fill="none" stroke="#111" stroke-width="1.4"/><ellipse cx="11.5" cy="322.5" rx="6.8" ry="4.3" fill="#DDE6F2" stroke="#111" stroke-width="1.5"/><rect x="3.2" y="321" width="3" height="3" fill="#2B6A96"/><rect x="16.8" y="321" width="3" height="3" fill="#2B6A96"/><rect x="10" y="316.7" width="3" height="3" fill="#2B6A96"/><path d="M5 344.500q1 -5 7.500 -4.500q6 .5 6 4.500q0 4.500 -7 4.500" fill="#E6DEE6" stroke="#111" stroke-width="1.4"/><rect x="3.5" y="343" width="3" height="3" fill="#2B6A96"/><rect x="10" y="347.5" width="3" height="3" fill="#2B6A96"/><path d="M9.500 358.500h6.500l3.500 3.500v8.500h-10z" fill="#FDFEFF" stroke="#8A9CB8" stroke-width="1"/><rect x="5.500" y="363.5" width="8" height="6" fill="#D8E080" stroke="#2F5A9A" stroke-width="1.2"/><circle cx="12.5" cy="371" r="3.3" fill="#D8E080" stroke="#4A5A6A" stroke-width="1.1"/><path d="M20 370.500v4h-4z" fill="#000"/><rect x="7.500" y="383.5" width="8" height="7.5" fill="#F0EC60" stroke="#2F5A9A" stroke-width="1.3"/><circle cx="15" cy="391.5" r="3.4" fill="#E8E490" stroke="#3A4A5A" stroke-width="1.2"/><rect x="5" y="388" width="3" height="3" fill="#2B6A96"/><rect x="10.8" y="409.3" width="2.8" height="2.8" fill="#1F3B69"/><rect x="7.500" y="427.5" width="10" height="10" fill="#fff"/><path d="M7.500 431l3.500 -3.500M7.500 434.500l7 -7M8 437.500l9.500 -9.500M11.500 437.500l6 -6M15 437.500l2.500 -2.500" fill="none" stroke="#3A6AA8" stroke-width="1.3"/><path d="M7.500 424v17.500M17.500 424v17.500M4 427.500h17M4 437.500h17" fill="none" stroke="#2F5A9A" stroke-width="1.3"/><path d="M4.500 448.500h10.500l5 5v7.500h-15.500z" fill="url(#icoblue2)" stroke="#2F5A9A" stroke-width="1.3"/><circle cx="11.5" cy="455" r="3" fill="#C8CED8" stroke="#6A7688" stroke-width="1.1"/><text x="12.300" y="481.500" text-anchor="middle" font-family="'Liberation Sans',sans-serif" font-size="17.5" fill="#111" stroke="#111" stroke-width=".4">A</text><rect x="999" y="102" width="25" height="368" fill="#EEEBDD"/><line x1="999" y1="470" x2="1024" y2="470" stroke="#B8B4A2" stroke-width="1.2"/><line x1="999" y1="471.2" x2="1024" y2="471.2" stroke="#F6F4EA" stroke-width="1"/><line x1="998.5" y1="101" x2="998.5" y2="470" stroke="#FBFAF5" stroke-width="1"/><line x1="1001.5" y1="105.1" x2="1021.5" y2="105.1" stroke="#FFFFFF" stroke-width="1.2"/><line x1="1001.5" y1="106.4" x2="1021.5" y2="106.4" stroke="#B5B19F" stroke-width="1.2"/><line x1="1001.5" y1="108.7" x2="1021.5" y2="108.7" stroke="#FFFFFF" stroke-width="1.2"/><line x1="1001.5" y1="110" x2="1021.5" y2="110" stroke="#B5B19F" stroke-width="1.2"/><line x1="997.5" y1="104" x2="997.5" y2="650" stroke="#D8D5C4" stroke-width="1"/><line x1="999" y1="101.5" x2="1024" y2="101.5" stroke="#FBFAF5" stroke-width="1"/><line x1="1003" y1="130.5" x2="1019.5" y2="130.5" stroke="#222" stroke-width="1.2"/><path d="M1006 128.500l8.500 -10.500l3.500 3l-8.500 10.500z" fill="#E8E8F4" stroke="#4A4A8A" stroke-width="0.8"/><path d="M1012.500 120.500l3.500 -4.500q2 -1 3 1l-3 6.500z" fill="#C8C820" stroke="#8A8A20" stroke-width="0.6"/><path d="M1006 128.500l2 -2.500l3.500 3l-2 2.500q-3 1 -3.500 -3z" fill="#E08070" stroke="#A04A3A" stroke-width="0.6"/><circle cx="1006" cy="141.5" r="3" fill="#D8E0EA" stroke="#222" stroke-width="1.3"/><circle cx="1012.5" cy="149.7" r="3.2" fill="#D0D8E2" stroke="#222" stroke-width="1.3"/><circle cx="1016" cy="149.2" r="3.2" fill="#E0E6EE" stroke="#222" stroke-width="1.3"/><path d="M1009.500 139q5 -2 6.500 3" fill="none" stroke="#1F3B69" stroke-width="1.8"/><path d="M1013 142h6l-2.500 3.500z" fill="#1F3B69"/><path d="M1009 162.500v10.500h-5.500z" fill="#F0F0F0" stroke="#111" stroke-width="1.3"/><path d="M1013 162.500v10.500h5.500z" fill="#D8D8D8" stroke="#111" stroke-width="1.3"/><line x1="1011" y1="159.5" x2="1011" y2="175.5" stroke="#2C7AC8" stroke-width="1.3"/><path d="M1019 196.500h-12q-3.500 0 -3.500 -3q0 -3 4 -3v-2.500q0 -3.500 3.500 -3.500q3.500 0 3.500 3.500v2.500h4.500" fill="none" stroke="#1F3B69" stroke-width="1.5"/><path d="M1019 193.500h-9v-5q0 -1.500 1.500 -1.500" fill="none" stroke="#4A90D8" stroke-width="1.2"/><rect x="1003.5" y="205" width="6" height="6" fill="url(#icoblue2)" stroke="#111" stroke-width="1.2"/><rect x="1012" y="205" width="6" height="6" fill="url(#icoblue2)" stroke="#111" stroke-width="1.2"/><rect x="1003.5" y="213.5" width="6" height="6" fill="url(#icoblue2)" stroke="#111" stroke-width="1.2"/><rect x="1012" y="213.5" width="6" height="6" fill="url(#icoblue2)" stroke="#111" stroke-width="1.2"/><path d="M1011 227v14M1004 234h14" fill="none" stroke="#4A6A9C" stroke-width="2.8"/><path d="M1011 225l4.500 4.500h-9zM1011 243l4.500 -4.500h-9zM1002 234l4.500 -4.500v9zM1020 234l-4.500 -4.500v9z" fill="#4A6A9C"/><rect x="1009.2" y="232.2" width="3.6" height="3.6" fill="#CFE0F4"/><path d="M1008.500 251.500q-3.500 2 -3 6q1 5.500 6.500 5.500q5.500 -.5 5.500 -6.500q0 -5.500 -5.500 -6" fill="none" stroke="#2A4A7C" stroke-width="2.6"/><path d="M1012 248l-7.500 1.500l4 6z" fill="#2A4A7C"/><rect x="1003.5" y="271" width="15" height="14.5" fill="url(#icoblue2)" stroke="#3A66A8" stroke-width="1.2"/><rect x="1003.5" y="277.5" width="7.5" height="8" fill="#F4F8FC" stroke="#111" stroke-width="1.2" stroke-dasharray="1.2 1.2"/><path d="M1009 292.500h-5.500v14.500h15l-7.500 -14.500z" fill="url(#icoblue2)" stroke="#111" stroke-width="1.4"/><line x1="1009" y1="293" x2="1009" y2="307" stroke="#111" stroke-width="1.2" stroke-dasharray="1.200 1.2"/><line x1="1003" y1="321.3" x2="1009" y2="321.3" stroke="#111" stroke-width="1.4"/><line x1="1011" y1="321.3" x2="1019.5" y2="321.3" stroke="#2C6AB8" stroke-width="1.2" stroke-dasharray="1.500 1.2"/><line x1="1006.5" y1="326.5" x2="1012.5" y2="316" stroke="#2C5A98" stroke-width="1.4"/><line x1="1003" y1="344.5" x2="1012" y2="344.5" stroke="#111" stroke-width="1.4" stroke-dasharray="2.500 1.5"/><line x1="1013" y1="350" x2="1018.7" y2="339" stroke="#2C5A98" stroke-width="1.5"/><rect x="1003.5" y="360.8" width="15" height="11" fill="url(#icoblue2)" stroke="#111" stroke-width="1.4"/><rect x="1012" y="359" width="3" height="3" fill="#4A6A9C"/><path d="M1007 382.500h-3.500v10.500h15v-10.500h-3.500" fill="url(#icoblue2)" stroke="#111" stroke-width="1.4"/><rect x="1006" y="381" width="2.8" height="2.8" fill="#4A6A9C"/><rect x="1014" y="381" width="2.8" height="2.8" fill="#4A6A9C"/><line x1="1003.7" y1="410" x2="1003.7" y2="418.5" stroke="#111" stroke-width="1.5"/><line x1="1011.5" y1="402.5" x2="1019" y2="402.5" stroke="#111" stroke-width="1.5"/><path d="M1003.700 409.500v-7h8" fill="none" stroke="#111" stroke-width="1.2" stroke-dasharray="1.200 1.2"/><line x1="1004" y1="410" x2="1012" y2="403" stroke="#4A90D8" stroke-width="1.8"/><line x1="1003.7" y1="432" x2="1003.7" y2="440.5" stroke="#111" stroke-width="1.5"/><line x1="1011.5" y1="424.5" x2="1019" y2="424.5" stroke="#111" stroke-width="1.5"/><path d="M1003.700 431.500v-7h8" fill="none" stroke="#111" stroke-width="1.2" stroke-dasharray="1.200 1.2"/><path d="M1004 432q1 -6.500 8 -7.500" fill="none" stroke="#4A90D8" stroke-width="1.8"/><path d="M1003 458l6 -6l3 3l-6 6q-3 0 -3 -3z" fill="#C8301C" stroke="#7A1A0E" stroke-width="0.8"/><path d="M1005 454l-1.500 -2M1009 460.500l2 1.500M1004 461.500l-1 1.500M1010.500 451l1 -2" fill="none" stroke="#D88A1C" stroke-width="1.3"/><path d="M1011 453l3 -3.500l2 -1.500M1014 449.500l3.500 -3.500M1015 451l3 -1" fill="none" stroke="#A8B0C0" stroke-width="1.2"/><path d="M1012 452l4 -4.500" fill="none" stroke="#1A1A1A" stroke-width="1.2"/><rect x="1003.5" y="452" width="1.2" height="1.2" fill="#3A1A0A"/><rect x="1006.5" y="450" width="1.2" height="1.2" fill="#3A1A0A"/><rect x="1011" y="456" width="1.2" height="1.2" fill="#3A1A0A"/><rect x="1012" y="459" width="1.2" height="1.2" fill="#3A1A0A"/><rect x="1008" y="461.5" width="1.2" height="1.2" fill="#3A1A0A"/><rect x="1004.5" y="449.5" width="1.2" height="1.2" fill="#3A1A0A"/></g>
<rect x="25" y="101" width="974" height="3" fill="#ECE9D8"/>
<line x1="26" y1="102.5" x2="997" y2="102.5" stroke="#A7A38F" stroke-width="1"/>
<line x1="26.5" y1="102" x2="26.5" y2="650" stroke="#A7A38F" stroke-width="1"/>
<line x1="27.5" y1="103" x2="27.5" y2="650" stroke="#D8D5C4" stroke-width="1"/>
<line x1="27" y1="103.5" x2="997" y2="103.5" stroke="#6E6B5E" stroke-width="1"/>
<g id="drawing"><line x1="83" y1="261.5" x2="138.5" y2="261.5" stroke="#1EE61E" stroke-width="1.2"/><line x1="83" y1="474.6" x2="138.5" y2="474.6" stroke="#1EE61E" stroke-width="1.2"/><line x1="110.3" y1="261" x2="110.3" y2="475" stroke="#1EE61E" stroke-width="1.3"/><circle cx="110.5" cy="261.5" r="4.6" fill="#18F018"/><circle cx="110.5" cy="475" r="4.6" fill="#18F018"/><rect x="164.5" y="260.5" width="1.5" height="1.5" fill="#9A9A9A"/><rect x="164.5" y="474.5" width="1.5" height="1.5" fill="#9A9A9A"/><path fill-rule="evenodd" fill="#20EE20" d="M43.8 349.5a25.6 12.8 0 1 0 51.2 0a25.6 12.8 0 1 0 -51.2 0zM47 349.8a22.5 6.7 0 1 0 45 0a22.5 6.7 0 1 0 -45 0z"/><path fill="none" stroke="#20EE20" stroke-width="4.4" stroke-linejoin="round" d="M69.3 388.4C62.5 377.5 46 375.5 46 388.3C46 401 62.5 399.5 69.3 388.4C76 377 92.8 375.8 92.8 388.6C92.8 401.8 76 400.5 69.3 388.4Z"/><clipPath id="profclip"><path d="M197.3 261.4L250.8 261.4L250.8 315.2L245.3 315.2L245.3 421.3L250.8 421.3L250.8 475.2L231.5 475.2L230.1 471.5L227.4 466.5L224.5 464.4L221.9 462.9L222.1 455.1L221.3 451.1L217.3 450.1L215.1 447.8L213.7 445.5L213.4 443L213.7 440.5L215 438L217.3 436.3L221.2 434.7L222.2 431L222.4 427L222.1 420.1L221 413.3L219.4 409L217.3 405.5L214.5 401.7L211 397.8L206.8 393.4L202.8 389.1L199.6 384.6L197.5 380L196.4 375.5L196.3 371.5L196.9 368L199.2 363.3L203.4 358.5L207.2 355.4L211.4 353.4L215 352.7L221.9 352.4L221.9 320.2L210.5 320.2L208.8 316.5L205.8 313L202.5 311L199.1 310.2L197.3 309.7Z"/></clipPath><path clip-path="url(#profclip)" d="M-16 480L209 255M-1.6 480L223.4 255M12.8 480L237.8 255M27.2 480L252.2 255M41.6 480L266.6 255M56 480L281 255M70.4 480L295.4 255M84.8 480L309.8 255M99.2 480L324.2 255M113.6 480L338.6 255M128 480L353 255M142.4 480L367.4 255M156.8 480L381.8 255M171.2 480L396.2 255M185.6 480L410.6 255M200 480L425 255M214.4 480L439.4 255M228.8 480L453.8 255M243.2 480L468.2 255" stroke="#46E646" stroke-width="1.3" fill="none"/><path d="M197.3 261.4L250.8 261.4L250.8 315.2L245.3 315.2L245.3 421.3L250.8 421.3L250.8 475.2L231.5 475.2L230.1 471.5L227.4 466.5L224.5 464.4L221.9 462.9L222.1 455.1L221.3 451.1L217.3 450.1L215.1 447.8L213.7 445.5L213.4 443L213.7 440.5L215 438L217.3 436.3L221.2 434.7L222.2 431L222.4 427L222.1 420.1L221 413.3L219.4 409L217.3 405.5L214.5 401.7L211 397.8L206.8 393.4L202.8 389.1L199.6 384.6L197.5 380L196.4 375.5L196.3 371.5L196.9 368L199.2 363.3L203.4 358.5L207.2 355.4L211.4 353.4L215 352.7L221.9 352.4L221.9 320.2L210.5 320.2L208.8 316.5L205.8 313L202.5 311L199.1 310.2L197.3 309.7Z" stroke="#3CE6BE" stroke-width="1.1" fill="none" stroke-linejoin="round"/><line x1="310.3" y1="261.5" x2="892" y2="261.5" stroke="#54CCE0" stroke-width="1.1"/><line x1="310.3" y1="309.5" x2="892" y2="309.5" stroke="#3CBE3C" stroke-width="1.1"/><line x1="310.3" y1="320.5" x2="892" y2="320.5" stroke="#FFFFFF" stroke-width="1.1"/><line x1="310.3" y1="352.5" x2="892" y2="352.5" stroke="#FFFFFF" stroke-width="1.1"/><line x1="310.3" y1="462.5" x2="892" y2="462.5" stroke="#3CBE3C" stroke-width="1.2"/><line x1="310.3" y1="475.5" x2="892" y2="475.5" stroke="#54CCE0" stroke-width="1.1"/><path id="xo" d="M-8.59 -8L-6.85 -6.67L-5.15 -5.33L-3.51 -4L-2.01 -2.67L-0.81 -1.33L-0.3 0L-0.81 1.33L-2.01 2.67L-3.51 4L-5.15 5.33L-6.85 6.67L-8.59 8M8.59 -8L6.85 -6.67L5.15 -5.33L3.51 -4L2.01 -2.67L0.81 -1.33L0.3 0L0.81 1.33L2.01 2.67L3.51 4L5.15 5.33L6.85 6.67L8.59 8" fill="none"/><path id="xo2" d="M-6.51 -6.4L-5.15 -5.33L-3.83 -4.27L-2.59 -3.2L-1.47 -2.13L-0.63 -1.07L-0.3 0L-0.63 1.07L-1.47 2.13L-2.59 3.2L-3.83 4.27L-5.15 5.33L-6.51 6.4M6.51 -6.4L5.15 -5.33L3.83 -4.27L2.59 -3.2L1.47 -2.13L0.63 -1.07L0.3 0L0.63 1.07L1.47 2.13L2.59 3.2L3.83 4.27L5.15 5.33L6.51 6.4" fill="none"/><g stroke="#36DE36" stroke-width="1.15" fill="none"><use href="#xo2" x="321.4" y="443.5"/><use href="#xo" x="362.4" y="443.5"/><use href="#xo" x="378.25" y="443.5"/><use href="#xo" x="394.1" y="443.5"/><use href="#xo" x="409.95" y="443.5"/><use href="#xo" x="450.4" y="443.5"/><use href="#xo" x="466.25" y="443.5"/><use href="#xo" x="482.1" y="443.5"/><use href="#xo" x="497.95" y="443.5"/><use href="#xo" x="538.4" y="443.5"/><use href="#xo" x="554.25" y="443.5"/><use href="#xo" x="570.1" y="443.5"/><use href="#xo" x="585.95" y="443.5"/><use href="#xo" x="626.4" y="443.5"/><use href="#xo" x="642.25" y="443.5"/><use href="#xo" x="658.1" y="443.5"/><use href="#xo" x="673.95" y="443.5"/><use href="#xo" x="714.4" y="443.5"/><use href="#xo" x="730.25" y="443.5"/><use href="#xo" x="746.1" y="443.5"/><use href="#xo" x="761.95" y="443.5"/><use href="#xo" x="802.4" y="443.5"/><use href="#xo" x="818.25" y="443.5"/><use href="#xo" x="834.1" y="443.5"/><use href="#xo" x="849.95" y="443.5"/><path d="M-6.51 -6.4L-5.15 -5.33L-3.83 -4.27L-2.59 -3.2L-1.47 -2.13L-0.63 -1.07L-0.3 0L-0.63 1.07L-1.47 2.13L-2.59 3.2L-3.83 4.27L-5.15 5.33L-6.51 6.4" transform="translate(891.6,443.5)"/></g><line x1="310.3" y1="435.5" x2="892" y2="435.5" stroke="#FFFFFF" stroke-width="1.2"/><line x1="310.3" y1="451.5" x2="892" y2="451.5" stroke="#FFFFFF" stroke-width="1.2"/><line x1="755" y1="479.5" x2="805" y2="479.5" stroke="#FFFFFF" stroke-width="1"/><line x1="780.5" y1="455" x2="780.5" y2="505" stroke="#FFFFFF" stroke-width="1"/><rect x="777.5" y="476.5" width="6" height="6" fill="none" stroke="#FFFFFF" stroke-width="1"/></g>
<rect x="979" y="104" width="17" height="529" fill="url(#vsb)"/>
<rect x="980.5" y="105" width="14" height="15" fill="url(#cbbtn)" stroke="#FFFFFF" stroke-width="1" rx="2"/>
<path d="M983.5 114.5l4 -4l4 4" fill="none" stroke="#4D6185" stroke-width="2.4"/>
<rect x="980.5" y="617" width="14" height="15" fill="url(#cbbtn)" stroke="#FFFFFF" stroke-width="1" rx="2"/>
<path d="M983.5 622.5l4 4l4 -4" fill="none" stroke="#4D6185" stroke-width="2.4"/>
<rect x="980.5" y="360.5" width="14" height="16" fill="url(#cbbtn)" stroke="#FFFFFF" stroke-width="1" rx="2"/>
<line x1="984" y1="364.5" x2="991" y2="364.5" stroke="#EEF4FE" stroke-width="1"/>
<line x1="984.5" y1="365.5" x2="991.5" y2="365.5" stroke="#8CB0F8" stroke-width="1"/>
<line x1="984" y1="366.5" x2="991" y2="366.5" stroke="#EEF4FE" stroke-width="1"/>
<line x1="984.5" y1="367.5" x2="991.5" y2="367.5" stroke="#8CB0F8" stroke-width="1"/>
<line x1="984" y1="368.5" x2="991" y2="368.5" stroke="#EEF4FE" stroke-width="1"/>
<line x1="984.5" y1="369.5" x2="991.5" y2="369.5" stroke="#8CB0F8" stroke-width="1"/>
<line x1="984" y1="370.5" x2="991" y2="370.5" stroke="#EEF4FE" stroke-width="1"/>
<line x1="984.5" y1="371.5" x2="991.5" y2="371.5" stroke="#8CB0F8" stroke-width="1"/>
<rect x="28" y="633" width="951" height="16" fill="#ECE9D8"/>
<rect x="28.5" y="633.5" width="17" height="15" fill="#EFEDE0" stroke="#FFFFFF" stroke-width="1"/>
<line x1="45.5" y1="634" x2="45.5" y2="649" stroke="#B5B19F" stroke-width="1"/>
<line x1="28" y1="648.5" x2="46" y2="648.5" stroke="#B5B19F" stroke-width="1"/>
<path d="M33.5 636.5v9" fill="none" stroke="#000" stroke-width="1.6"/>
<path d="M40.5 636.5v9l-5 -4.500z" fill="#000"/>
<rect x="46.5" y="633.5" width="17" height="15" fill="#EFEDE0" stroke="#FFFFFF" stroke-width="1"/>
<line x1="63.5" y1="634" x2="63.5" y2="649" stroke="#B5B19F" stroke-width="1"/>
<line x1="46" y1="648.5" x2="64" y2="648.5" stroke="#B5B19F" stroke-width="1"/>
<path d="M57.5 636.5v9l-5 -4.500z" fill="#000"/>
<rect x="64.5" y="633.5" width="17" height="15" fill="#EFEDE0" stroke="#FFFFFF" stroke-width="1"/>
<line x1="81.5" y1="634" x2="81.5" y2="649" stroke="#B5B19F" stroke-width="1"/>
<line x1="64" y1="648.5" x2="82" y2="648.5" stroke="#B5B19F" stroke-width="1"/>
<path d="M70.5 636.5v9l5 -4.500z" fill="#000"/>
<rect x="82.5" y="633.5" width="17" height="15" fill="#EFEDE0" stroke="#FFFFFF" stroke-width="1"/>
<line x1="99.5" y1="634" x2="99.5" y2="649" stroke="#B5B19F" stroke-width="1"/>
<line x1="82" y1="648.5" x2="100" y2="648.5" stroke="#B5B19F" stroke-width="1"/>
<path d="M94.5 636.5v9" fill="none" stroke="#000" stroke-width="1.6"/>
<path d="M87.5 636.5v9l5 -4.500z" fill="#000"/>
<path d="M140.500 633.500L146.500 647.500H184.500L190.500 633.500" fill="#F4F2E8" stroke="#000" stroke-width="1"/>
<text class="cjk" x="149.5 160.5" y="644.82" font-size="12" fill="#000">布局</text>
<text transform="translate(172,644.5) scale(0.92,1)" x="-0.01" font-family="'Liberation Serif',serif" font-size="12" fill="#000">1</text>
<path d="M104 633L109.500 647.500H140.500L146.500 633Z" fill="#000" stroke="#000" stroke-width="1"/>
<path d="M103.500 633.500L109 647.500" fill="none" stroke="#000" stroke-width="1"/>
<text class="cjk" x="111.75 123.75" y="644.75" font-size="12.5" font-weight="bold" fill="#fff">模型</text>
<rect x="655.5" y="634.5" width="4" height="13" fill="#F7F6F0" stroke="#FFFFFF" stroke-width="1"/>
<line x1="655.5" y1="634" x2="655.5" y2="648" stroke="#E2DFCF" stroke-width="1"/>
<pattern id="dith" width="2" height="2" patternUnits="userSpaceOnUse"><rect width="2" height="2" fill="#ECE9D8"/><rect width="1" height="1" fill="#fff"/><rect x="1" y="1" width="1" height="1" fill="#fff"/></pattern>
<rect x="678" y="634" width="301" height="14" fill="url(#dith)"/>
<rect x="661.5" y="634" width="15" height="13" fill="url(#cbbtn)" stroke="#FFFFFF" stroke-width="1" rx="2"/>
<path d="M671 636.5l-4 4l4 4" fill="none" stroke="#4D6185" stroke-width="2.4"/>
<line x1="28" y1="648.5" x2="996" y2="648.5" stroke="#F4F2E8" stroke-width="1"/>
<rect x="979" y="633" width="17" height="16" fill="#ECE9D8"/>
<line x1="0" y1="653.5" x2="1024" y2="653.5" stroke="#FFFFFF" stroke-width="1"/>
<line x1="0" y1="654.5" x2="1024" y2="654.5" stroke="#D4D0C0" stroke-width="1"/>
<line x1="0" y1="655.5" x2="1024" y2="655.5" stroke="#22211C" stroke-width="1.2"/>
<line x1="0" y1="657" x2="1024" y2="657" stroke="#F8F7F1" stroke-width="1"/>
<rect x="5.5" y="664" width="3.2" height="40" fill="#F7F6EE"/>
<line x1="6" y1="664" x2="6" y2="704" stroke="#FFFFFF" stroke-width="1"/>
<line x1="8.7" y1="664" x2="8.7" y2="704" stroke="#BDB9A6" stroke-width="1"/>
<rect x="9.8" y="664" width="3.2" height="40" fill="#F7F6EE"/>
<line x1="10.3" y1="664" x2="10.3" y2="704" stroke="#FFFFFF" stroke-width="1"/>
<line x1="13" y1="664" x2="13" y2="704" stroke="#BDB9A6" stroke-width="1"/>
<line x1="17.5" y1="661" x2="17.5" y2="709.5" stroke="#2A2925" stroke-width="1"/>
<line x1="16.5" y1="661.5" x2="1024" y2="661.5" stroke="#1E1D1A" stroke-width="1"/>
<rect x="932" y="704.5" width="28" height="3" fill="#C4D4F6"/>
<rect x="962" y="704.5" width="38" height="3" fill="#D6E2FA"/>
<line x1="17" y1="692.5" x2="1024" y2="692.5" stroke="#8C8C8C" stroke-width="1"/>
<line x1="0" y1="709.5" x2="1024" y2="709.5" stroke="#FFFFFF" stroke-width="1"/>
<line x1="0" y1="710.5" x2="1024" y2="710.5" stroke="#C9C6B6" stroke-width="1"/>
<text class="cjk" x="19.05 35.05" y="673.75" font-size="12.5" fill="#000">命令</text>
<text transform="translate(51,673) scale(0.92,1)" x="1.59" font-family="'Liberation Serif',serif" font-size="12" fill="#000">:</text>
<text class="cjk" x="19.05 35.05" y="686.75" font-size="12.5" fill="#000">命令</text>
<text transform="translate(51,686) scale(0.92,1)" x="1.59" font-family="'Liberation Serif',serif" font-size="12" fill="#000">:</text>
<text transform="translate(65,686.5) scale(1.03,1)" x="0 7.8 15.6 23.4 31.2 39 46.8" font-family="'Liberation Mono',monospace" font-size="13" fill="#000">_saveas</text>
<text class="cjk" x="19.05 35.05" y="705.75" font-size="12.5" fill="#000">命令</text>
<text transform="translate(51,705) scale(0.92,1)" x="1.59" font-family="'Liberation Serif',serif" font-size="12" fill="#000">:</text>
<rect x="0" y="711" width="1024" height="23" fill="#ECE9D8"/>
<line x1="0" y1="711.5" x2="1024" y2="711.5" stroke="#FFFFFF" stroke-width="1"/>
<rect x="5.5" y="715.5" width="248" height="17" fill="#EFEDE1" stroke="#B9B6A5" stroke-width="1"/>
<line x1="6" y1="732.5" x2="254" y2="732.5" stroke="#FFFFFF" stroke-width="1"/>
<line x1="253.5" y1="716" x2="253.5" y2="733" stroke="#FFFFFF" stroke-width="1"/>
<text transform="translate(8,729) scale(0.92,1)" x="0.26 6.78 13.3 19.83 27.85 32.87 39.39 47.41 53.93 58.96 65.48 72 78.52 86.54 91.57 98.09 106.11 112.63 117.65 125.67 130.7 137.22" font-family="'Liberation Serif',serif" font-size="12" fill="#A9A695">1654.63, 2362.58, 0.00</text>
<rect x="259" y="715" width="27" height="18" fill="#EFEDE2"/>
<line x1="259" y1="715.5" x2="286" y2="715.5" stroke="#FFFFFF" stroke-width="1"/>
<line x1="259.5" y1="715" x2="259.5" y2="733" stroke="#FFFFFF" stroke-width="1"/>
<line x1="259" y1="732.5" x2="286" y2="732.5" stroke="#B0AD9C" stroke-width="1"/>
<line x1="285.5" y1="715" x2="285.5" y2="733" stroke="#B0AD9C" stroke-width="1"/>
<text class="cjk" x="260.25 272.25" y="729.25" font-size="12.5" fill="#000">捕捉</text>
<rect x="291" y="715" width="28" height="18" fill="#EFEDE2"/>
<line x1="291" y1="715.5" x2="319" y2="715.5" stroke="#FFFFFF" stroke-width="1"/>
<line x1="291.5" y1="715" x2="291.5" y2="733" stroke="#FFFFFF" stroke-width="1"/>
<line x1="291" y1="732.5" x2="319" y2="732.5" stroke="#B0AD9C" stroke-width="1"/>
<line x1="318.5" y1="715" x2="318.5" y2="733" stroke="#B0AD9C" stroke-width="1"/>
<text class="cjk" x="292.75 304.75" y="729.25" font-size="12.5" fill="#000">栅格</text>
<rect x="323" y="715" width="28" height="18" fill="#EFEDE2"/>
<line x1="323" y1="715.5" x2="351" y2="715.5" stroke="#FFFFFF" stroke-width="1"/>
<line x1="323.5" y1="715" x2="323.5" y2="733" stroke="#FFFFFF" stroke-width="1"/>
<line x1="323" y1="732.5" x2="351" y2="732.5" stroke="#B0AD9C" stroke-width="1"/>
<line x1="350.5" y1="715" x2="350.5" y2="733" stroke="#B0AD9C" stroke-width="1"/>
<text class="cjk" x="324.75 336.75" y="729.25" font-size="12.5" fill="#000">正交</text>
<rect x="355" y="715" width="28" height="18" fill="#F6F5EE"/>
<line x1="355" y1="715.5" x2="383" y2="715.5" stroke="#1C1B17" stroke-width="1.3"/>
<line x1="355.5" y1="715" x2="355.5" y2="733" stroke="#1C1B17" stroke-width="1.3"/>
<line x1="355" y1="732.5" x2="383" y2="732.5" stroke="#FFFFFF" stroke-width="1"/>
<line x1="382.5" y1="716" x2="382.5" y2="733" stroke="#FFFFFF" stroke-width="1"/>
<text class="cjk" x="357.25 369.25" y="729.75" font-size="12.5" fill="#000">极轴</text>
<rect x="387" y="715" width="52" height="18" fill="#F6F5EE"/>
<line x1="387" y1="715.5" x2="439" y2="715.5" stroke="#1C1B17" stroke-width="1.3"/>
<line x1="387.5" y1="715" x2="387.5" y2="733" stroke="#1C1B17" stroke-width="1.3"/>
<line x1="387" y1="732.5" x2="439" y2="732.5" stroke="#FFFFFF" stroke-width="1"/>
<line x1="438.5" y1="716" x2="438.5" y2="733" stroke="#FFFFFF" stroke-width="1"/>
<text class="cjk" x="389.25 401.25 413.25 425.25" y="729.75" font-size="12.5" fill="#000">对象捕捉</text>
<rect x="443" y="715" width="52" height="18" fill="#F6F5EE"/>
<line x1="443" y1="715.5" x2="495" y2="715.5" stroke="#1C1B17" stroke-width="1.3"/>
<line x1="443.5" y1="715" x2="443.5" y2="733" stroke="#1C1B17" stroke-width="1.3"/>
<line x1="443" y1="732.5" x2="495" y2="732.5" stroke="#FFFFFF" stroke-width="1"/>
<line x1="494.5" y1="716" x2="494.5" y2="733" stroke="#FFFFFF" stroke-width="1"/>
<text class="cjk" x="445.25 457.25 469.25 481.25" y="729.75" font-size="12.5" fill="#000">对象追踪</text>
<rect x="499" y="715" width="28" height="18" fill="#EFEDE2"/>
<line x1="499" y1="715.5" x2="527" y2="715.5" stroke="#FFFFFF" stroke-width="1"/>
<line x1="499.5" y1="715" x2="499.5" y2="733" stroke="#FFFFFF" stroke-width="1"/>
<line x1="499" y1="732.5" x2="527" y2="732.5" stroke="#B0AD9C" stroke-width="1"/>
<line x1="526.5" y1="715" x2="526.5" y2="733" stroke="#B0AD9C" stroke-width="1"/>
<text class="cjk" x="500.75 512.75" y="729.25" font-size="12.5" fill="#000">线宽</text>
<rect x="531" y="715" width="28" height="18" fill="#F6F5EE"/>
<line x1="531" y1="715.5" x2="559" y2="715.5" stroke="#1C1B17" stroke-width="1.3"/>
<line x1="531.5" y1="715" x2="531.5" y2="733" stroke="#1C1B17" stroke-width="1.3"/>
<line x1="531" y1="732.5" x2="559" y2="732.5" stroke="#FFFFFF" stroke-width="1"/>
<line x1="558.5" y1="716" x2="558.5" y2="733" stroke="#FFFFFF" stroke-width="1"/>
<text class="cjk" x="533.25 545.25" y="729.75" font-size="12.5" fill="#000">模型</text>
<rect x="984.5" y="715.5" width="23" height="17.5" fill="#F2F0E6" stroke="#FAFAF5" stroke-width="1"/>
<path d="M989 727l5.500 -8.500l4 3zM988 729.500h9M992 727l-1.500 2.500" fill="#9AA8C5" stroke="#6B7896" stroke-width="1"/>
<path d="M997.800 719.500l6 12h-12z" fill="#FFD91A" stroke="#6A5800" stroke-width="1"/>
<rect x="997" y="723.3" width="1.6" height="4.2" fill="#000"/>
<rect x="997" y="728.5" width="1.6" height="1.6" fill="#000"/>
<path d="M1013.5 722.5h7l-3.500 4z" fill="#000"/>
<path d="M13 744q2 -1.500 7 0.2l-1.300 7q-4 -1.500 -7 0.2z" fill="#E8542A"/>
<path d="M21 745q2 -1.500 7 0.2l-1.300 7q-4 -1.500 -7 0.2z" fill="#7FBA3C"/>
<path d="M11.500 752q2 -1.500 7 0.2l-1.300 7q-4 -1.500 -7 0.2z" fill="#3C7DD8"/>
<path d="M19.500 753q2 -1.500 7 0.2l-1.300 7q-4 -1.500 -7 0.2z" fill="#F5C52C"/>
<text class="cjk" transform="translate(38.5,758.48) skewX(-14)" x="0 19" y="0" font-size="18" font-weight="300" fill="#fff">开始</text>
<rect x="106" y="743" width="2" height="2" fill="#1941A5"/>
<rect x="109" y="745" width="2" height="2" fill="#1941A5"/>
<rect x="106" y="747" width="2" height="2" fill="#1941A5"/>
<rect x="109" y="749" width="2" height="2" fill="#1941A5"/>
<rect x="106" y="751" width="2" height="2" fill="#1941A5"/>
<rect x="109" y="753" width="2" height="2" fill="#1941A5"/>
<rect x="106" y="755" width="2" height="2" fill="#1941A5"/>
<rect x="109" y="757" width="2" height="2" fill="#1941A5"/>
<rect x="106" y="759" width="2" height="2" fill="#1941A5"/>
<rect x="109" y="761" width="2" height="2" fill="#1941A5"/>
<rect x="106" y="763" width="2" height="2" fill="#1941A5"/>
<rect x="109" y="765" width="2" height="2" fill="#1941A5"/>
<rect x="208" y="743" width="2" height="2" fill="#1941A5"/>
<rect x="211" y="745" width="2" height="2" fill="#1941A5"/>
<rect x="208" y="747" width="2" height="2" fill="#1941A5"/>
<rect x="211" y="749" width="2" height="2" fill="#1941A5"/>
<rect x="208" y="751" width="2" height="2" fill="#1941A5"/>
<rect x="211" y="753" width="2" height="2" fill="#1941A5"/>
<rect x="208" y="755" width="2" height="2" fill="#1941A5"/>
<rect x="211" y="757" width="2" height="2" fill="#1941A5"/>
<rect x="208" y="759" width="2" height="2" fill="#1941A5"/>
<rect x="211" y="761" width="2" height="2" fill="#1941A5"/>
<rect x="208" y="763" width="2" height="2" fill="#1941A5"/>
<rect x="211" y="765" width="2" height="2" fill="#1941A5"/>
<rect x="805" y="743" width="2" height="2" fill="#1941A5"/>
<rect x="808" y="745" width="2" height="2" fill="#1941A5"/>
<rect x="805" y="747" width="2" height="2" fill="#1941A5"/>
<rect x="808" y="749" width="2" height="2" fill="#1941A5"/>
<rect x="805" y="751" width="2" height="2" fill="#1941A5"/>
<rect x="808" y="753" width="2" height="2" fill="#1941A5"/>
<rect x="805" y="755" width="2" height="2" fill="#1941A5"/>
<rect x="808" y="757" width="2" height="2" fill="#1941A5"/>
<rect x="805" y="759" width="2" height="2" fill="#1941A5"/>
<rect x="808" y="761" width="2" height="2" fill="#1941A5"/>
<rect x="805" y="763" width="2" height="2" fill="#1941A5"/>
<rect x="808" y="765" width="2" height="2" fill="#1941A5"/>
<rect x="862" y="743" width="2" height="2" fill="#1941A5"/>
<rect x="865" y="745" width="2" height="2" fill="#1941A5"/>
<rect x="862" y="747" width="2" height="2" fill="#1941A5"/>
<rect x="865" y="749" width="2" height="2" fill="#1941A5"/>
<rect x="862" y="751" width="2" height="2" fill="#1941A5"/>
<rect x="865" y="753" width="2" height="2" fill="#1941A5"/>
<rect x="862" y="755" width="2" height="2" fill="#1941A5"/>
<rect x="865" y="757" width="2" height="2" fill="#1941A5"/>
<rect x="862" y="759" width="2" height="2" fill="#1941A5"/>
<rect x="865" y="761" width="2" height="2" fill="#1941A5"/>
<rect x="862" y="763" width="2" height="2" fill="#1941A5"/>
<rect x="865" y="765" width="2" height="2" fill="#1941A5"/>
<rect x="119.5" y="745.5" width="15" height="15" fill="#F4C078" stroke="#E89A48" stroke-width="1.5" rx="1"/>
<rect x="122" y="748" width="10" height="10" fill="#F8E0C0"/>
<path d="M124 748.500l8 4.500l-8 4.500z" fill="#1A1A1A"/>
<path d="M143.500 750.500l6.500 -5.500l7.500 7l-5 6z" fill="#3C8CE8" stroke="#0E2F78" stroke-width="0.8"/>
<path d="M142.500 751l2.500 -2.500q5 7 12 5.500l.5 3.500q-9 3 -15 -6.500z" fill="#F6DC1C" stroke="#5A4A00" stroke-width="0.7"/>
<path d="M144.500 756q5 4.500 12 2" fill="none" stroke="#1A1A1A" stroke-width="1.6"/>
<path d="M168 748l2.500 12h7l2.500 -12z" fill="#C8A064" stroke="#7A5A2A" stroke-width="1"/>
<path d="M170 749l1 -5M173 749v-6M176 749l2 -5" fill="none" stroke="#C23B22" stroke-width="1.4"/>
<path d="M171.500 749l3 -4" fill="none" stroke="#2D9B3C" stroke-width="1.4"/>
<path d="M193.500 745.500l2.500 2.500l-2.500 2.500M197.500 745.500l2.500 2.500l-2.500 2.500" fill="none" stroke="#B5D0FF" stroke-width="1.3"/>
<path d="M230.500 745.500h9l3.500 3.500v12h-12.500z" fill="#FFFFFF" stroke="#8A8A8A" stroke-width="1"/>
<circle cx="234" cy="753.500" r="4.300" fill="none" stroke="#1F4FC4" stroke-width="2.6"/>
<path d="M230 753.500h8" fill="none" stroke="#1F4FC4" stroke-width="1.6"/>
<path d="M228 755q7 -8 13 -6" fill="none" stroke="#F0C030" stroke-width="1.3"/>
<text class="cjk" x="246.75 258.75 270.75" y="757.25" font-size="12.5" fill="#fff">室内人</text>
<text transform="translate(283,756.5) scale(0.92,1)" x="1.26" font-family="'Liberation Serif',serif" font-size="12" fill="#fff">-</text>
<text class="cjk" x="288.75 300.75 312.75" y="757.25" font-size="12.5" fill="#fff">室内设</text>
<text transform="translate(325,756.5) scale(0.92,1)" x="1.76 8.28 14.8" font-family="'Liberation Serif',serif" font-size="12" fill="#fff">...</text>
<path d="M373.500 748.500q0 -1.500 1.500 -1.500h3.500l1.500 1.500h6.500q1.500 0 1.500 1.500v6.500q0 1.500 -1.500 1.500h-12q-1.500 0 -1.500 -1.500z" fill="#F3CE5C" stroke="#5A4A1A" stroke-width="1"/>
<path d="M375 751.500h12.500l-1 5.500h-11.500z" fill="#FBE48A"/>
<text class="cjk" x="392.75" y="757.25" font-size="12.5" fill="#fff">车</text>
<rect x="519.5" y="745.5" width="15" height="15" fill="#2E8B9E" stroke="#E8F4F6" stroke-width="1"/>
<text x="527" y="758.500" text-anchor="middle" font-family="'Liberation Sans',sans-serif" font-weight="bold" font-size="14" fill="#fff">a</text>
<text transform="translate(539.5,757) scale(0.76,1)" x="-0.39 8.82 18.03 24.57 31.45 39 46.88 57.59 63.96 71.84 79.72 87.6 96.98 104.86 112.73 120.61" font-family="'Liberation Serif',serif" font-size="12" fill="#fff">AutoCAD 2004 ...</text>
<path d="M665.500 748l2 12h7l2 -12z" fill="#C8A064" stroke="#7A5A2A" stroke-width="1"/>
<path d="M667 749l1 -5M670.500 749v-6M674 749l2 -5" fill="none" stroke="#C23B22" stroke-width="1.4"/>
<path d="M669 749l3 -4" fill="none" stroke="#2D9B3C" stroke-width="1.4"/>
<text transform="translate(683,757) scale(0.92,1)" x="0.26 6.78 14.8 20.83" font-family="'Liberation Serif',serif" font-size="12" fill="#fff">12 -</text>
<text class="cjk" x="712.75 724.75" y="757.75" font-size="12.5" fill="#fff">画图</text>
<text class="cjk" x="813.75 825.75" y="757.25" font-size="12.5" fill="#A8C8F8">桌面</text>
<path d="M846.500 745.500l2.500 2.500l-2.500 2.500M850.500 745.500l2.500 2.500l-2.500 2.500" fill="none" stroke="#B5D0FF" stroke-width="1.3"/>
<rect x="875.5" y="749.5" width="14" height="9" fill="#F2F2F2" stroke="#1A1A1A" stroke-width="1.4" rx="1.5"/>
<path d="M877.500 752.500h10M877.500 755h10" fill="none" stroke="#1A1A1A" stroke-width="1" stroke-dasharray="1.2 1"/>
<path d="M877 749v-2.500h11" fill="none" stroke="#1A1A1A" stroke-width="1" stroke-dasharray="1.2 1"/>
<rect x="897.5" y="746.5" width="12" height="13" fill="#FFFDE8" stroke="#1A1A1A" stroke-width="1.6" rx="1.5"/>
<path d="M903 759.500l3 3v-3z" fill="#FFFDE8" stroke="#1A1A1A" stroke-width="1"/>
<text x="903.5" y="757.5" text-anchor="middle" font-family="'Liberation Sans',sans-serif" font-weight="bold" font-size="12" fill="#000">?</text>
<path d="M924.500 746.500h6v4h-6z" fill="none" stroke="#fff" stroke-width="1.4"/>
<rect x="921.5" y="749.5" width="6" height="4" fill="#2562DF" stroke="#fff" stroke-width="1.4"/>
<path d="M922.500 757.500h6l-3 3.500z" fill="#D8E6FF"/>
<circle cx="948" cy="753" r="8.6" fill="url(#trayb)" stroke="#DCEBFF" stroke-width="1"/>
<path d="M950 749l-4 4l4 4" fill="none" stroke="#fff" stroke-width="2.2"/>
<rect x="963.5" y="745.5" width="9" height="8" fill="#6F6A8C" stroke="#2B2848" stroke-width="1"/>
<rect x="958.5" y="749.5" width="9" height="8" fill="#7C779A" stroke="#2B2848" stroke-width="1"/>
<rect x="960" y="751" width="6" height="5" fill="#3B4C8C"/>
<rect x="965" y="747" width="6" height="5" fill="#8A3B5C"/>
<text transform="translate(981,757) scale(0.92,1)" x="0.26 6.78 14.64 19.83 26.35" font-family="'Liberation Serif',serif" font-size="12" fill="#fff">12:40</text>
<path d="M848.500 630.500H1008.500Q1020.500 630.500 1020.500 642.500V692.500Q1020.500 704.500 1008.500 704.500H979.500L994 722.500L960.500 704.500H848.500Q836.500 704.500 836.500 692.500V642.500Q836.500 630.500 848.500 630.500Z" fill="#FFFFE1" stroke="#000" stroke-width="1"/>
<circle cx="853.5" cy="646.5" r="7.3" fill="url(#infog)" stroke="#8FA6C8" stroke-width=".8"/>
<path d="M851 652.500l0.500 4.500l4 -4.500z" fill="#C8D8F0" stroke="#8FA6C8" stroke-width="0.6"/>
<text x="853.600" y="651.5" text-anchor="middle" font-family="'Liberation Serif',serif" font-weight="bold" font-size="13" fill="#1C3FA8">i</text>
<text class="cjk" x="871.85 884.55 897.25 909.95" y="650.18" font-size="13" font-weight="bold" fill="#000">通信中心</text>
<rect x="996.5" y="640.5" width="15" height="15" fill="#F4F3E0" stroke="#A8A89A" stroke-width="1"/>
<path d="M1000.500 644.500l7 7M1007.500 644.500l-7 7" fill="none" stroke="#000" stroke-width="2.2"/>
<text class="cjk" x="851.75 863.75 875.75 887.75 899.75 911.75 923.75 935.75 947.75 959.75 971.75 983.75 995.75" y="672.25" font-size="12.5" fill="#000">使软件保持最新的简单方法。</text>
<text class="cjk" x="851.75 863.75 875.75 887.75 899.75" y="689.75" font-size="12.5" fill="#0000F0">单击此处。</text>
<line x1="852" y1="691.5" x2="912" y2="691.5" stroke="#0000F0" stroke-width="1"/>
</svg>
</div>
</body>
</html>
